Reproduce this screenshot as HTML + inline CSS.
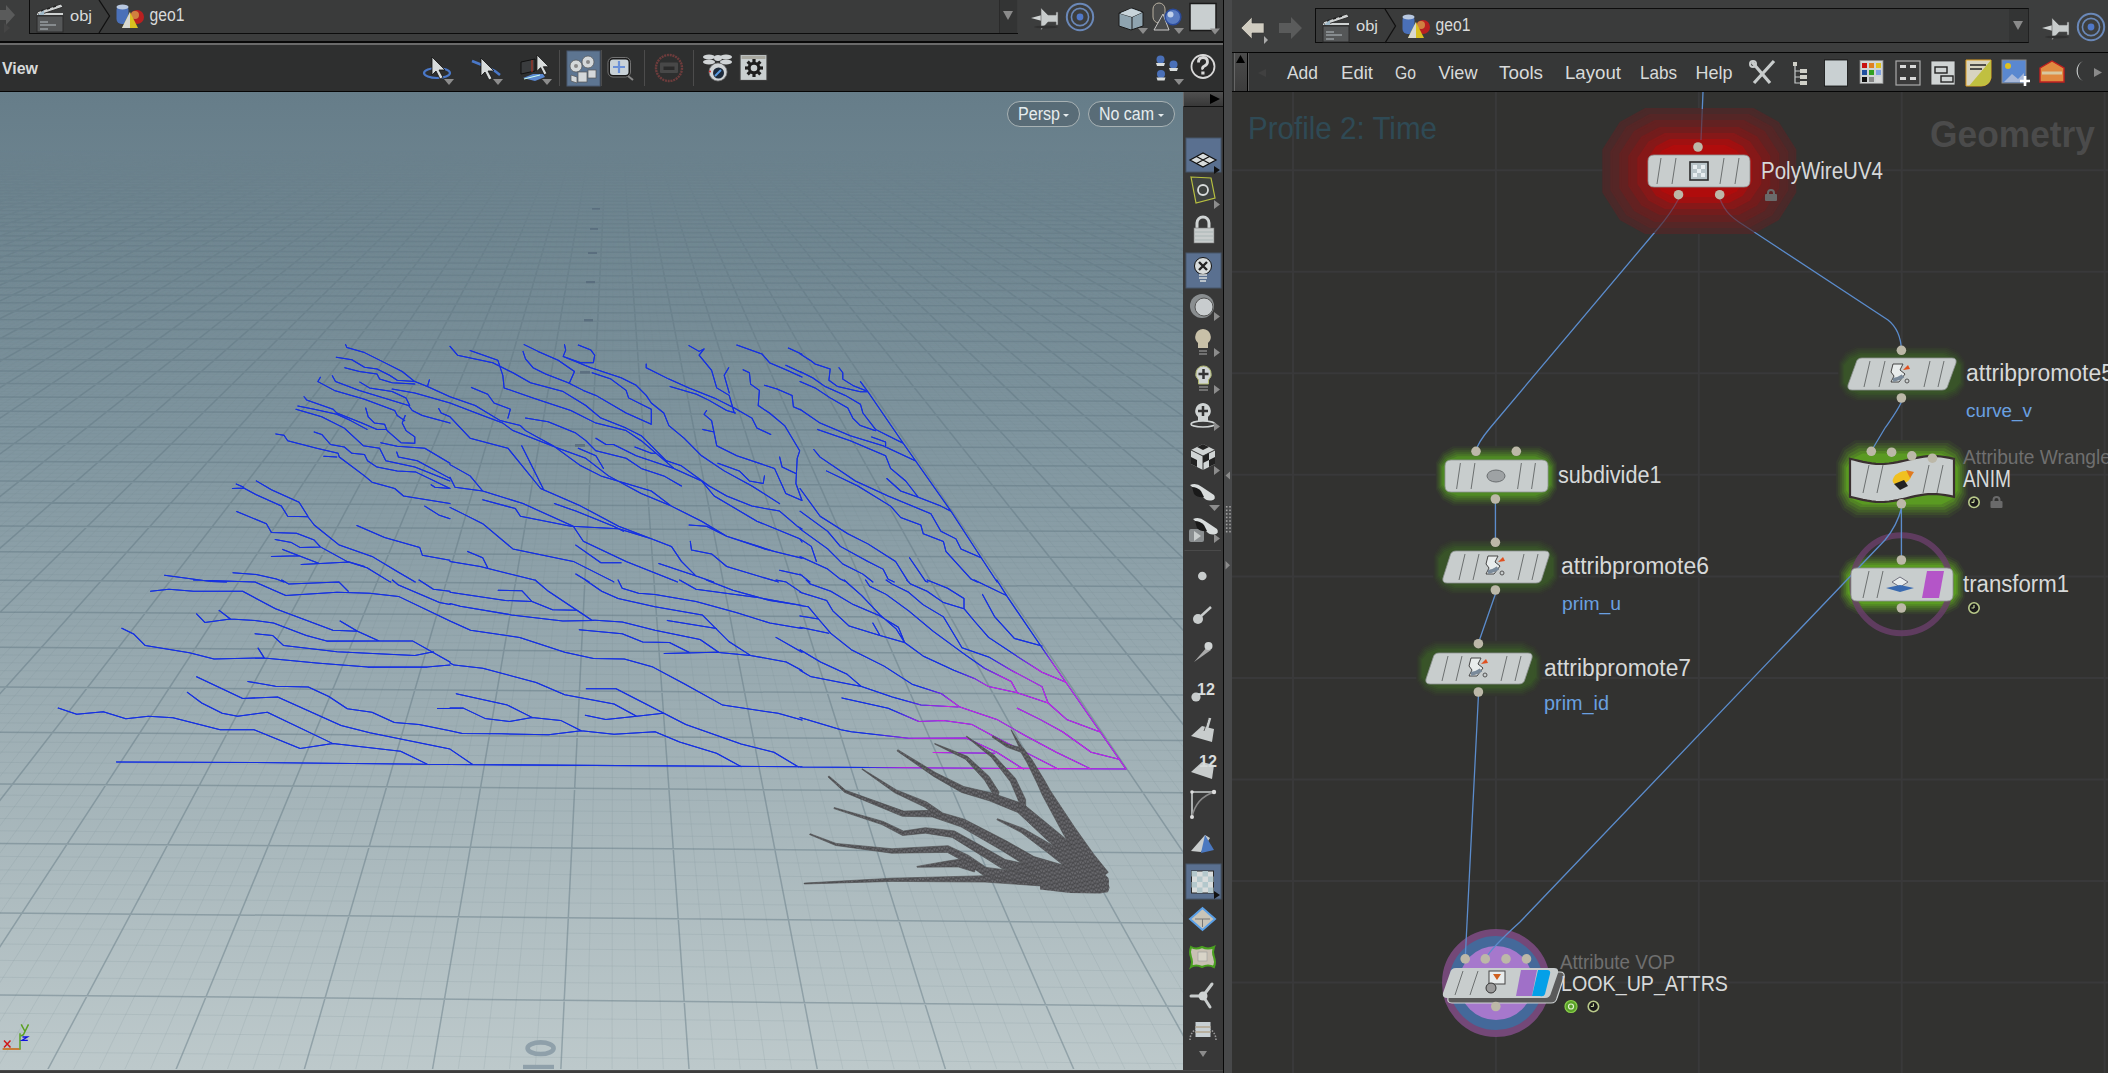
<!DOCTYPE html><html><head><meta charset="utf-8"><style>
*{margin:0;padding:0;box-sizing:border-box}
html,body{width:2108px;height:1073px;overflow:hidden;background:#2b2b2b;font-family:"Liberation Sans",sans-serif}
.a{position:absolute}
svg{position:absolute;left:0;top:0;overflow:hidden}
</style></head><body><svg width="1183" height="1073" viewBox="0 0 1183 1073" style="left:0;top:0"><defs><linearGradient id="vg" x1="0" y1="92" x2="0" y2="1070" gradientUnits="userSpaceOnUse"><stop offset="0" stop-color="#667d89"/><stop offset="0.35" stop-color="#7f959f"/><stop offset="0.7" stop-color="#a3b3b8"/><stop offset="1" stop-color="#bdc9cb"/></linearGradient><linearGradient id="gm" x1="0" y1="150" x2="0" y2="1070" gradientUnits="userSpaceOnUse"><stop offset="0" stop-color="#fff" stop-opacity="0"/><stop offset="0.038" stop-color="#fff" stop-opacity="0.45"/><stop offset="0.087" stop-color="#fff" stop-opacity="0.85"/><stop offset="0.17" stop-color="#fff" stop-opacity="1"/><stop offset="1" stop-color="#fff" stop-opacity="1"/></linearGradient><mask id="gmask" maskUnits="userSpaceOnUse" x="0" y="0" width="1183" height="1073"><rect x="0" y="92" width="1183" height="978" fill="url(#gm)"/></mask><clipPath id="vclip"><rect x="0" y="92" width="1183" height="977"/></clipPath></defs><rect x="0" y="92" width="1183" height="978" fill="url(#vg)"/><g clip-path="url(#vclip)"><g mask="url(#gmask)"><path d="M0.0 1072.2L1183.0 1084.4M0.0 1051.8L1183.0 1063.7M0.0 1032.1L1183.0 1043.8M0.0 1013.2L1183.0 1024.7M0.0 977.3L1183.0 988.5M0.0 960.4L1183.0 971.3M0.0 944.0L1183.0 954.7M0.0 928.2L1183.0 938.7M0.0 898.1L1183.0 908.3M0.0 883.7L1183.0 893.8M0.0 869.9L1183.0 879.7M0.0 856.4L1183.0 866.1M0.0 830.8L1183.0 840.2M0.0 818.5L1183.0 827.8M0.0 806.6L1183.0 815.8M0.0 795.1L1183.0 804.1M0.0 773.0L1183.0 781.7M0.0 762.4L1183.0 771.0M0.0 752.1L1183.0 760.6M0.0 742.0L1183.0 750.5M0.0 722.8L1183.0 731.0M0.0 713.5L1183.0 721.6M0.0 704.5L1183.0 712.5M0.0 695.7L1183.0 703.6M0.0 678.8L1183.0 686.5M0.0 670.6L1183.0 678.2M0.0 662.7L1183.0 670.2M0.0 654.9L1183.0 662.3M0.0 639.9L1183.0 647.1M0.0 632.7L1183.0 639.8M0.0 625.6L1183.0 632.7M0.0 618.7L1183.0 625.7M0.0 605.3L1183.0 612.1M0.0 598.8L1183.0 605.6M0.0 592.5L1183.0 599.2M0.0 586.3L1183.0 592.9M0.0 574.3L1183.0 580.8M0.0 568.5L1183.0 574.9M0.0 562.8L1183.0 569.1M0.0 557.2L1183.0 563.5M0.0 546.3L1183.0 552.5M0.0 541.1L1183.0 547.2M0.0 535.9L1183.0 542.0M0.0 530.9L1183.0 536.9M0.0 521.0L1183.0 526.9M0.0 516.3L1183.0 522.1M0.0 511.6L1183.0 517.3M0.0 507.0L1183.0 512.7M0.0 498.0L1183.0 503.6M0.0 493.7L1183.0 499.2M0.0 489.4L1183.0 494.9M0.0 485.2L1183.0 490.6M0.0 477.0L1183.0 482.4M0.0 473.0L1183.0 478.3M0.0 469.1L1183.0 474.4M0.0 465.2L1183.0 470.4M0.0 457.7L1183.0 462.8M0.0 454.0L1183.0 459.1M0.0 450.4L1183.0 455.5M0.0 446.9L1183.0 451.9M0.0 439.9L1183.0 444.9M0.0 436.5L1183.0 441.4M0.0 433.2L1183.0 438.1M0.0 429.9L1183.0 434.8M0.0 423.5L1183.0 428.3M0.0 420.4L1183.0 425.1M0.0 417.3L1183.0 422.0M0.0 414.3L1183.0 418.9M0.0 408.3L1183.0 412.9M0.0 405.4L1183.0 410.0M0.0 402.5L1183.0 407.1M0.0 399.7L1183.0 404.2M0.0 394.2L1183.0 398.6M0.0 391.5L1183.0 395.9M0.0 388.8L1183.0 393.2M0.0 386.2L1183.0 390.5M0.0 381.0L1183.0 385.3M0.0 378.5L1183.0 382.7M0.0 376.0L1183.0 380.2M0.0 373.6L1183.0 377.7M0.0 368.7L1183.0 372.9M0.0 366.4L1183.0 370.5M0.0 364.1L1183.0 368.1M0.0 361.8L1183.0 365.8M0.0 357.3L1183.0 361.2M0.0 355.0L1183.0 359.0M0.0 352.9L1183.0 356.8M0.0 350.7L1183.0 354.6M0.0 346.5L1183.0 350.3M0.0 344.4L1183.0 348.2M0.0 342.3L1183.0 346.2M0.0 340.3L1183.0 344.1M0.0 336.3L1183.0 340.1M0.0 334.4L1183.0 338.1M0.0 332.4L1183.0 336.2M0.0 330.5L1183.0 334.2M0.0 326.8L1183.0 330.4M0.0 324.9L1183.0 328.6M0.0 323.1L1183.0 326.7M0.0 321.3L1183.0 324.9M0.0 317.8L1183.0 321.3M0.0 316.1L1183.0 319.6M0.0 314.3L1183.0 317.8M0.0 312.6L1183.0 316.1M0.0 309.3L1183.0 312.7M0.0 307.6L1183.0 311.1M0.0 306.0L1183.0 309.4M0.0 304.4L1183.0 307.8M0.0 301.2L1183.0 304.6M0.0 299.7L1183.0 303.0M0.0 298.1L1183.0 301.5M0.0 296.6L1183.0 299.9M0.0 293.6L1183.0 296.9M0.0 292.1L1183.0 295.4M0.0 290.7L1183.0 293.9M0.0 289.2L1183.0 292.4M0.0 286.4L1183.0 289.6M0.0 285.0L1183.0 288.1M0.0 283.6L1183.0 286.7M0.0 282.2L1183.0 285.3M0.0 279.5L1183.0 282.6M0.0 278.2L1183.0 281.3M0.0 276.9L1183.0 279.9M0.0 275.5L1183.0 278.6M0.0 273.0L1183.0 276.0M0.0 271.7L1183.0 274.7M0.0 270.4L1183.0 273.4M0.0 269.2L1183.0 272.2M0.0 266.7L1183.0 269.7M0.0 265.5L1183.0 268.5M0.0 264.3L1183.0 267.2M0.0 263.1L1183.0 266.0M0.0 260.8L1183.0 263.7M0.0 259.6L1183.0 262.5M0.0 258.5L1183.0 261.3M0.0 257.4L1183.0 260.2M0.0 255.1L1183.0 257.9M0.0 254.0L1183.0 256.8M0.0 252.9L1183.0 255.7M0.0 251.8L1183.0 254.6M0.0 249.7L1183.0 252.4M0.0 248.6L1183.0 251.4M0.0 247.6L1183.0 250.3M0.0 246.6L1183.0 249.3M0.0 244.5L1183.0 247.2M0.0 243.5L1183.0 246.2M0.0 242.5L1183.0 245.2M0.0 241.5L1183.0 244.2M0.0 239.5L1183.0 242.2M0.0 238.6L1183.0 241.2M0.0 237.6L1183.0 240.2M0.0 236.7L1183.0 239.3M0.0 234.8L1183.0 237.4M0.0 233.8L1183.0 236.4M0.0 232.9L1183.0 235.5M0.0 232.0L1183.0 234.6M0.0 230.2L1183.0 232.7M0.0 229.3L1183.0 231.8M0.0 228.4L1183.0 230.9M0.0 227.6L1183.0 230.1M0.0 225.8L1183.0 228.3M0.0 225.0L1183.0 227.4M0.0 224.1L1183.0 226.6M0.0 223.3L1183.0 225.7M0.0 221.6L1183.0 224.0M0.0 220.8L1183.0 223.2M0.0 220.0L1183.0 222.4M0.0 219.2L1183.0 221.6M0.0 217.6L1183.0 219.9M0.0 216.8L1183.0 219.1M0.0 216.0L1183.0 218.3M0.0 215.2L1183.0 217.6M0.0 213.7L1183.0 216.0M0.0 212.9L1183.0 215.2M0.0 212.1L1183.0 214.5M0.0 211.4L1183.0 213.7M0.0 209.9L1183.0 212.2M0.0 209.2L1183.0 211.4M0.0 208.4L1183.0 210.7M0.0 207.7L1183.0 210.0M0.0 206.3L1183.0 208.5M0.0 205.6L1183.0 207.8M0.0 204.9L1183.0 207.1M0.0 204.2L1183.0 206.4M0.0 202.8L1183.0 205.0M0.0 202.1L1183.0 204.3M0.0 201.4L1183.0 203.6M0.0 200.7L1183.0 202.9M0.0 199.4L1183.0 201.6M0.0 198.7L1183.0 200.9M0.0 198.1L1183.0 200.3M0.0 197.4L1183.0 199.6M0.0 196.2L1183.0 198.3M0.0 195.5L1183.0 197.6M0.0 194.9L1183.0 197.0M0.0 194.3L1183.0 196.4M0.0 193.0L1183.0 195.1M0.0 192.4L1183.0 194.5M0.0 191.8L1183.0 193.9M0.0 191.2L1183.0 193.3M0.0 190.0L1183.0 192.0M0.0 189.4L1183.0 191.4M0.0 188.8L1183.0 190.8M0.0 188.2L1183.0 190.2M0.0 187.0L1183.0 189.1M0.0 186.5L1183.0 188.5M0.0 185.9L1183.0 187.9M0.0 185.3L1183.0 187.3M0.0 184.2L1183.0 186.2M0.0 183.6L1183.0 185.6M0.0 183.1L1183.0 185.1M0.0 182.5L1183.0 184.5M0.0 181.4L1183.0 183.4M0.0 180.9L1183.0 182.8M0.0 180.3L1183.0 182.3M0.0 179.8L1183.0 181.8M0.0 178.8L1183.0 180.7M0.0 178.2L1183.0 180.2M0.0 177.7L1183.0 179.6M0.0 177.2L1183.0 179.1M0.0 176.2L1183.0 178.1M0.0 175.7L1183.0 177.6M0.0 175.2L1183.0 177.1M0.0 174.7L1183.0 176.5M0.0 173.7L1183.0 175.5M0.0 173.2L1183.0 175.0M0.0 172.7L1183.0 174.5M0.0 172.2L1183.0 174.1M0.0 171.2L1183.0 173.1M0.0 170.7L1183.0 172.6M0.0 170.3L1183.0 172.1M0.0 169.8L1183.0 171.6M0.0 168.9L1183.0 170.7M0.0 168.4L1183.0 170.2M0.0 167.9L1183.0 169.7M0.0 167.5L1183.0 169.3M0.0 166.6L1183.0 168.4M0.0 166.1L1183.0 167.9M0.0 165.7L1183.0 167.5M0.0 165.2L1183.0 167.0M0.0 164.3L1183.0 166.1M0.0 163.9L1183.0 165.7M0.0 163.5L1183.0 165.2M0.0 163.0L1183.0 164.8M0.0 162.2L1183.0 163.9M0.0 161.7L1183.0 163.5M0.0 161.3L1183.0 163.1M0.0 160.9L1183.0 162.6M0.0 160.1L1183.0 161.8M0.0 159.6L1183.0 161.4M0.0 159.2L1183.0 160.9M0.0 158.8L1183.0 160.5M0.0 158.0L1183.0 159.7M0.0 157.6L1183.0 159.3M0.0 157.2L1183.0 158.9M0.0 156.8L1183.0 158.5M0.0 156.0L1183.0 157.7M0.0 155.6L1183.0 157.3M0.0 155.2L1183.0 156.9M0.0 154.8L1183.0 156.5M0.0 154.1L1183.0 155.7M0.0 153.7L1183.0 155.3M0.0 153.3L1183.0 155.0M0.0 152.9L1183.0 154.6M0.0 152.2L1183.0 153.8M0.0 151.8L1183.0 153.4M0.0 151.4L1183.0 153.1M0.0 151.1L1183.0 152.7M0.0 150.3L1183.0 152.0M-475.2 150.0L-7626.2 1070.0M-471.8 150.0L-7600.5 1070.0M-468.4 150.0L-7574.9 1070.0M-465.0 150.0L-7549.2 1070.0M-458.2 150.0L-7497.9 1070.0M-454.9 150.0L-7472.2 1070.0M-451.5 150.0L-7446.6 1070.0M-448.1 150.0L-7420.9 1070.0M-441.3 150.0L-7369.6 1070.0M-437.9 150.0L-7343.9 1070.0M-434.5 150.0L-7318.2 1070.0M-431.1 150.0L-7292.6 1070.0M-424.4 150.0L-7241.2 1070.0M-421.0 150.0L-7215.6 1070.0M-417.6 150.0L-7189.9 1070.0M-414.2 150.0L-7164.3 1070.0M-407.4 150.0L-7112.9 1070.0M-404.0 150.0L-7087.3 1070.0M-400.6 150.0L-7061.6 1070.0M-397.2 150.0L-7035.9 1070.0M-390.5 150.0L-6984.6 1070.0M-387.1 150.0L-6958.9 1070.0M-383.7 150.0L-6933.3 1070.0M-380.3 150.0L-6907.6 1070.0M-373.5 150.0L-6856.3 1070.0M-370.1 150.0L-6830.6 1070.0M-366.7 150.0L-6804.9 1070.0M-363.3 150.0L-6779.3 1070.0M-356.6 150.0L-6728.0 1070.0M-353.2 150.0L-6702.3 1070.0M-349.8 150.0L-6676.6 1070.0M-346.4 150.0L-6651.0 1070.0M-339.6 150.0L-6599.6 1070.0M-336.2 150.0L-6574.0 1070.0M-332.8 150.0L-6548.3 1070.0M-329.4 150.0L-6522.6 1070.0M-322.7 150.0L-6471.3 1070.0M-319.3 150.0L-6445.6 1070.0M-315.9 150.0L-6420.0 1070.0M-312.5 150.0L-6394.3 1070.0M-305.7 150.0L-6343.0 1070.0M-302.3 150.0L-6317.3 1070.0M-298.9 150.0L-6291.7 1070.0M-295.5 150.0L-6266.0 1070.0M-288.8 150.0L-6214.7 1070.0M-285.4 150.0L-6189.0 1070.0M-282.0 150.0L-6163.3 1070.0M-278.6 150.0L-6137.7 1070.0M-271.8 150.0L-6086.3 1070.0M-268.4 150.0L-6060.7 1070.0M-265.0 150.0L-6035.0 1070.0M-261.6 150.0L-6009.3 1070.0M-254.9 150.0L-5958.0 1070.0M-251.5 150.0L-5932.4 1070.0M-248.1 150.0L-5906.7 1070.0M-244.7 150.0L-5881.0 1070.0M-237.9 150.0L-5829.7 1070.0M-234.5 150.0L-5804.0 1070.0M-231.1 150.0L-5778.4 1070.0M-227.8 150.0L-5752.7 1070.0M-221.0 150.0L-5701.4 1070.0M-217.6 150.0L-5675.7 1070.0M-214.2 150.0L-5650.0 1070.0M-210.8 150.0L-5624.4 1070.0M-204.0 150.0L-5573.1 1070.0M-200.6 150.0L-5547.4 1070.0M-197.2 150.0L-5521.7 1070.0M-193.9 150.0L-5496.1 1070.0M-187.1 150.0L-5444.7 1070.0M-183.7 150.0L-5419.1 1070.0M-180.3 150.0L-5393.4 1070.0M-176.9 150.0L-5367.7 1070.0M-170.1 150.0L-5316.4 1070.0M-166.7 150.0L-5290.7 1070.0M-163.3 150.0L-5265.1 1070.0M-160.0 150.0L-5239.4 1070.0M-153.2 150.0L-5188.1 1070.0M-149.8 150.0L-5162.4 1070.0M-146.4 150.0L-5136.8 1070.0M-143.0 150.0L-5111.1 1070.0M-136.2 150.0L-5059.8 1070.0M-132.8 150.0L-5034.1 1070.0M-129.5 150.0L-5008.4 1070.0M-126.1 150.0L-4982.8 1070.0M-119.3 150.0L-4931.4 1070.0M-115.9 150.0L-4905.8 1070.0M-112.5 150.0L-4880.1 1070.0M-109.1 150.0L-4854.4 1070.0M-102.3 150.0L-4803.1 1070.0M-98.9 150.0L-4777.5 1070.0M-95.6 150.0L-4751.8 1070.0M-92.2 150.0L-4726.1 1070.0M-85.4 150.0L-4674.8 1070.0M-82.0 150.0L-4649.1 1070.0M-78.6 150.0L-4623.5 1070.0M-75.2 150.0L-4597.8 1070.0M-68.4 150.0L-4546.5 1070.0M-65.0 150.0L-4520.8 1070.0M-61.7 150.0L-4495.1 1070.0M-58.3 150.0L-4469.5 1070.0M-51.5 150.0L-4418.1 1070.0M-48.1 150.0L-4392.5 1070.0M-44.7 150.0L-4366.8 1070.0M-41.3 150.0L-4341.2 1070.0M-34.5 150.0L-4289.8 1070.0M-31.2 150.0L-4264.2 1070.0M-27.8 150.0L-4238.5 1070.0M-24.4 150.0L-4212.8 1070.0M-17.6 150.0L-4161.5 1070.0M-14.2 150.0L-4135.8 1070.0M-10.8 150.0L-4110.2 1070.0M-7.4 150.0L-4084.5 1070.0M-0.6 150.0L-4033.2 1070.0M2.7 150.0L-4007.5 1070.0M6.1 150.0L-3981.9 1070.0M9.5 150.0L-3956.2 1070.0M16.3 150.0L-3904.9 1070.0M19.7 150.0L-3879.2 1070.0M23.1 150.0L-3853.5 1070.0M26.5 150.0L-3827.9 1070.0M33.3 150.0L-3776.5 1070.0M36.6 150.0L-3750.9 1070.0M40.0 150.0L-3725.2 1070.0M43.4 150.0L-3699.5 1070.0M50.2 150.0L-3648.2 1070.0M53.6 150.0L-3622.5 1070.0M57.0 150.0L-3596.9 1070.0M60.4 150.0L-3571.2 1070.0M67.1 150.0L-3519.9 1070.0M70.5 150.0L-3494.2 1070.0M73.9 150.0L-3468.6 1070.0M77.3 150.0L-3442.9 1070.0M84.1 150.0L-3391.6 1070.0M87.5 150.0L-3365.9 1070.0M90.9 150.0L-3340.2 1070.0M94.3 150.0L-3314.6 1070.0M101.0 150.0L-3263.2 1070.0M104.4 150.0L-3237.6 1070.0M107.8 150.0L-3211.9 1070.0M111.2 150.0L-3186.3 1070.0M118.0 150.0L-3134.9 1070.0M121.4 150.0L-3109.3 1070.0M124.8 150.0L-3083.6 1070.0M128.2 150.0L-3057.9 1070.0M134.9 150.0L-3006.6 1070.0M138.3 150.0L-2980.9 1070.0M141.7 150.0L-2955.3 1070.0M145.1 150.0L-2929.6 1070.0M151.9 150.0L-2878.3 1070.0M155.3 150.0L-2852.6 1070.0M158.7 150.0L-2826.9 1070.0M162.1 150.0L-2801.3 1070.0M168.8 150.0L-2750.0 1070.0M172.2 150.0L-2724.3 1070.0M175.6 150.0L-2698.6 1070.0M179.0 150.0L-2673.0 1070.0M185.8 150.0L-2621.6 1070.0M189.2 150.0L-2596.0 1070.0M192.6 150.0L-2570.3 1070.0M196.0 150.0L-2544.6 1070.0M202.7 150.0L-2493.3 1070.0M206.1 150.0L-2467.6 1070.0M209.5 150.0L-2442.0 1070.0M212.9 150.0L-2416.3 1070.0M219.7 150.0L-2365.0 1070.0M223.1 150.0L-2339.3 1070.0M226.5 150.0L-2313.7 1070.0M229.9 150.0L-2288.0 1070.0M236.6 150.0L-2236.7 1070.0M240.0 150.0L-2211.0 1070.0M243.4 150.0L-2185.3 1070.0M246.8 150.0L-2159.7 1070.0M253.6 150.0L-2108.3 1070.0M257.0 150.0L-2082.7 1070.0M260.4 150.0L-2057.0 1070.0M263.7 150.0L-2031.3 1070.0M270.5 150.0L-1980.0 1070.0M273.9 150.0L-1954.4 1070.0M277.3 150.0L-1928.7 1070.0M280.7 150.0L-1903.0 1070.0M287.5 150.0L-1851.7 1070.0M290.9 150.0L-1826.0 1070.0M294.3 150.0L-1800.4 1070.0M297.6 150.0L-1774.7 1070.0M304.4 150.0L-1723.4 1070.0M307.8 150.0L-1697.7 1070.0M311.2 150.0L-1672.0 1070.0M314.6 150.0L-1646.4 1070.0M321.4 150.0L-1595.0 1070.0M324.8 150.0L-1569.4 1070.0M328.2 150.0L-1543.7 1070.0M331.5 150.0L-1518.1 1070.0M338.3 150.0L-1466.7 1070.0M341.7 150.0L-1441.1 1070.0M345.1 150.0L-1415.4 1070.0M348.5 150.0L-1389.7 1070.0M355.3 150.0L-1338.4 1070.0M358.7 150.0L-1312.7 1070.0M362.0 150.0L-1287.1 1070.0M365.4 150.0L-1261.4 1070.0M372.2 150.0L-1210.1 1070.0M375.6 150.0L-1184.4 1070.0M379.0 150.0L-1158.8 1070.0M382.4 150.0L-1133.1 1070.0M389.2 150.0L-1081.8 1070.0M392.6 150.0L-1056.1 1070.0M395.9 150.0L-1030.4 1070.0M399.3 150.0L-1004.8 1070.0M406.1 150.0L-953.4 1070.0M409.5 150.0L-927.8 1070.0M412.9 150.0L-902.1 1070.0M416.3 150.0L-876.4 1070.0M423.1 150.0L-825.1 1070.0M426.5 150.0L-799.4 1070.0M429.8 150.0L-773.8 1070.0M433.2 150.0L-748.1 1070.0M440.0 150.0L-696.8 1070.0M443.4 150.0L-671.1 1070.0M446.8 150.0L-645.5 1070.0M450.2 150.0L-619.8 1070.0M457.0 150.0L-568.5 1070.0M460.3 150.0L-542.8 1070.0M463.7 150.0L-517.1 1070.0M467.1 150.0L-491.5 1070.0M473.9 150.0L-440.1 1070.0M477.3 150.0L-414.5 1070.0M480.7 150.0L-388.8 1070.0M484.1 150.0L-363.2 1070.0M490.9 150.0L-311.8 1070.0M494.2 150.0L-286.2 1070.0M497.6 150.0L-260.5 1070.0M501.0 150.0L-234.8 1070.0M507.8 150.0L-183.5 1070.0M511.2 150.0L-157.8 1070.0M514.6 150.0L-132.2 1070.0M518.0 150.0L-106.5 1070.0M524.8 150.0L-55.2 1070.0M528.1 150.0L-29.5 1070.0M531.5 150.0L-3.8 1070.0M534.9 150.0L21.8 1070.0M541.7 150.0L73.1 1070.0M545.1 150.0L98.8 1070.0M548.5 150.0L124.5 1070.0M551.9 150.0L150.1 1070.0M558.6 150.0L201.5 1070.0M562.0 150.0L227.1 1070.0M565.4 150.0L252.8 1070.0M568.8 150.0L278.5 1070.0M575.6 150.0L329.8 1070.0M579.0 150.0L355.5 1070.0M582.4 150.0L381.1 1070.0M585.8 150.0L406.8 1070.0M592.5 150.0L458.1 1070.0M595.9 150.0L483.8 1070.0M599.3 150.0L509.4 1070.0M602.7 150.0L535.1 1070.0M609.5 150.0L586.4 1070.0M612.9 150.0L612.1 1070.0M616.3 150.0L637.8 1070.0M619.7 150.0L663.4 1070.0M626.4 150.0L714.8 1070.0M629.8 150.0L740.4 1070.0M633.2 150.0L766.1 1070.0M636.6 150.0L791.8 1070.0M643.4 150.0L843.1 1070.0M646.8 150.0L868.7 1070.0M650.2 150.0L894.4 1070.0M653.6 150.0L920.1 1070.0M660.3 150.0L971.4 1070.0M663.7 150.0L997.1 1070.0M667.1 150.0L1022.7 1070.0M670.5 150.0L1048.4 1070.0M677.3 150.0L1099.7 1070.0M680.7 150.0L1125.4 1070.0M684.1 150.0L1151.1 1070.0M687.5 150.0L1176.7 1070.0M694.2 150.0L1228.0 1070.0M697.6 150.0L1253.7 1070.0M701.0 150.0L1279.4 1070.0M704.4 150.0L1305.0 1070.0M711.2 150.0L1356.4 1070.0M714.6 150.0L1382.0 1070.0M718.0 150.0L1407.7 1070.0M721.4 150.0L1433.4 1070.0M728.1 150.0L1484.7 1070.0M731.5 150.0L1510.4 1070.0M734.9 150.0L1536.0 1070.0M738.3 150.0L1561.7 1070.0M745.1 150.0L1613.0 1070.0M748.5 150.0L1638.7 1070.0M751.9 150.0L1664.3 1070.0M755.2 150.0L1690.0 1070.0M762.0 150.0L1741.3 1070.0M765.4 150.0L1767.0 1070.0M768.8 150.0L1792.7 1070.0M772.2 150.0L1818.3 1070.0M779.0 150.0L1869.7 1070.0M782.4 150.0L1895.3 1070.0M785.8 150.0L1921.0 1070.0M789.1 150.0L1946.7 1070.0M795.9 150.0L1998.0 1070.0M799.3 150.0L2023.6 1070.0M802.7 150.0L2049.3 1070.0M806.1 150.0L2075.0 1070.0M812.9 150.0L2126.3 1070.0M816.3 150.0L2152.0 1070.0M819.6 150.0L2177.6 1070.0M823.0 150.0L2203.3 1070.0M829.8 150.0L2254.6 1070.0M833.2 150.0L2280.3 1070.0M836.6 150.0L2306.0 1070.0M840.0 150.0L2331.6 1070.0M846.8 150.0L2383.0 1070.0M850.2 150.0L2408.6 1070.0M853.5 150.0L2434.3 1070.0M856.9 150.0L2459.9 1070.0M863.7 150.0L2511.3 1070.0M867.1 150.0L2536.9 1070.0M870.5 150.0L2562.6 1070.0M873.9 150.0L2588.3 1070.0M880.7 150.0L2639.6 1070.0M884.1 150.0L2665.3 1070.0M887.4 150.0L2690.9 1070.0M890.8 150.0L2716.6 1070.0M897.6 150.0L2767.9 1070.0M901.0 150.0L2793.6 1070.0M904.4 150.0L2819.2 1070.0M907.8 150.0L2844.9 1070.0M914.6 150.0L2896.2 1070.0M917.9 150.0L2921.9 1070.0M921.3 150.0L2947.6 1070.0M924.7 150.0L2973.2 1070.0M931.5 150.0L3024.6 1070.0M934.9 150.0L3050.2 1070.0M938.3 150.0L3075.9 1070.0M941.7 150.0L3101.6 1070.0M948.5 150.0L3152.9 1070.0M951.8 150.0L3178.6 1070.0M955.2 150.0L3204.2 1070.0M958.6 150.0L3229.9 1070.0M965.4 150.0L3281.2 1070.0M968.8 150.0L3306.9 1070.0M972.2 150.0L3332.5 1070.0M975.6 150.0L3358.2 1070.0M982.4 150.0L3409.5 1070.0M985.7 150.0L3435.2 1070.0M989.1 150.0L3460.9 1070.0M992.5 150.0L3486.5 1070.0M999.3 150.0L3537.9 1070.0M1002.7 150.0L3563.5 1070.0M1006.1 150.0L3589.2 1070.0M1009.5 150.0L3614.8 1070.0M1016.2 150.0L3666.2 1070.0M1019.6 150.0L3691.8 1070.0M1023.0 150.0L3717.5 1070.0M1026.4 150.0L3743.2 1070.0M1033.2 150.0L3794.5 1070.0M1036.6 150.0L3820.2 1070.0M1040.0 150.0L3845.8 1070.0M1043.4 150.0L3871.5 1070.0M1050.1 150.0L3922.8 1070.0M1053.5 150.0L3948.5 1070.0M1056.9 150.0L3974.2 1070.0M1060.3 150.0L3999.8 1070.0M1067.1 150.0L4051.1 1070.0M1070.5 150.0L4076.8 1070.0M1073.9 150.0L4102.5 1070.0M1077.3 150.0L4128.1 1070.0M1084.0 150.0L4179.5 1070.0M1087.4 150.0L4205.1 1070.0M1090.8 150.0L4230.8 1070.0M1094.2 150.0L4256.5 1070.0M1101.0 150.0L4307.8 1070.0M1104.4 150.0L4333.5 1070.0M1107.8 150.0L4359.1 1070.0M1111.2 150.0L4384.8 1070.0M1117.9 150.0L4436.1 1070.0M1121.3 150.0L4461.8 1070.0M1124.7 150.0L4487.4 1070.0M1128.1 150.0L4513.1 1070.0M1134.9 150.0L4564.4 1070.0M1138.3 150.0L4590.1 1070.0M1141.7 150.0L4615.8 1070.0M1145.1 150.0L4641.4 1070.0M1151.8 150.0L4692.8 1070.0M1155.2 150.0L4718.4 1070.0M1158.6 150.0L4744.1 1070.0M1162.0 150.0L4769.8 1070.0M1168.8 150.0L4821.1 1070.0M1172.2 150.0L4846.7 1070.0M1175.6 150.0L4872.4 1070.0M1179.0 150.0L4898.1 1070.0M1185.7 150.0L4949.4 1070.0M1189.1 150.0L4975.1 1070.0M1192.5 150.0L5000.7 1070.0M1195.9 150.0L5026.4 1070.0M1202.7 150.0L5077.7 1070.0M1206.1 150.0L5103.4 1070.0M1209.5 150.0L5129.1 1070.0M1212.8 150.0L5154.7 1070.0M1219.6 150.0L5206.0 1070.0M1223.0 150.0L5231.7 1070.0M1226.4 150.0L5257.4 1070.0M1229.8 150.0L5283.0 1070.0M1236.6 150.0L5334.4 1070.0M1240.0 150.0L5360.0 1070.0M1243.4 150.0L5385.7 1070.0M1246.7 150.0L5411.4 1070.0M1253.5 150.0L5462.7 1070.0M1256.9 150.0L5488.4 1070.0M1260.3 150.0L5514.0 1070.0M1263.7 150.0L5539.7 1070.0M1270.5 150.0L5591.0 1070.0M1273.9 150.0L5616.7 1070.0M1277.3 150.0L5642.3 1070.0M1280.6 150.0L5668.0 1070.0M1287.4 150.0L5719.3 1070.0M1290.8 150.0L5745.0 1070.0M1294.2 150.0L5770.7 1070.0M1297.6 150.0L5796.3 1070.0M1304.4 150.0L5847.7 1070.0M1307.8 150.0L5873.3 1070.0M1311.1 150.0L5899.0 1070.0M1314.5 150.0L5924.7 1070.0M1321.3 150.0L5976.0 1070.0M1324.7 150.0L6001.7 1070.0M1328.1 150.0L6027.3 1070.0M1331.5 150.0L6053.0 1070.0M1338.3 150.0L6104.3 1070.0M1341.7 150.0L6130.0 1070.0M1345.0 150.0L6155.6 1070.0M1348.4 150.0L6181.3 1070.0M1355.2 150.0L6232.6 1070.0M1358.6 150.0L6258.3 1070.0M1362.0 150.0L6284.0 1070.0M1365.4 150.0L6309.6 1070.0M1372.2 150.0L6361.0 1070.0M1375.6 150.0L6386.6 1070.0M1378.9 150.0L6412.3 1070.0M1382.3 150.0L6437.9 1070.0M1389.1 150.0L6489.3 1070.0M1392.5 150.0L6514.9 1070.0M1395.9 150.0L6540.6 1070.0M1399.3 150.0L6566.3 1070.0M1406.1 150.0L6617.6 1070.0M1409.4 150.0L6643.3 1070.0M1412.8 150.0L6668.9 1070.0M1416.2 150.0L6694.6 1070.0M1423.0 150.0L6745.9 1070.0M1426.4 150.0L6771.6 1070.0M1429.8 150.0L6797.3 1070.0M1433.2 150.0L6822.9 1070.0M1440.0 150.0L6874.2 1070.0M1443.3 150.0L6899.9 1070.0M1446.7 150.0L6925.6 1070.0M1450.1 150.0L6951.2 1070.0M1456.9 150.0L7002.6 1070.0M1460.3 150.0L7028.2 1070.0M1463.7 150.0L7053.9 1070.0M1467.1 150.0L7079.6 1070.0M1473.9 150.0L7130.9 1070.0M1477.2 150.0L7156.6 1070.0M1480.6 150.0L7182.2 1070.0M1484.0 150.0L7207.9 1070.0M1490.8 150.0L7259.2 1070.0M1494.2 150.0L7284.9 1070.0M1497.6 150.0L7310.5 1070.0M1501.0 150.0L7336.2 1070.0M1507.7 150.0L7387.5 1070.0M1511.1 150.0L7413.2 1070.0M1514.5 150.0L7438.9 1070.0M1517.9 150.0L7464.5 1070.0M1524.7 150.0L7515.9 1070.0M1528.1 150.0L7541.5 1070.0M1531.5 150.0L7567.2 1070.0M1534.9 150.0L7592.9 1070.0M1541.6 150.0L7644.2 1070.0M1545.0 150.0L7669.8 1070.0M1548.4 150.0L7695.5 1070.0M1551.8 150.0L7721.2 1070.0" stroke="#6f8590" stroke-opacity="0.14" stroke-width="1" fill="none"/><path d="M0.0 994.9L1183.0 1006.2M0.0 912.9L1183.0 923.2M0.0 843.4L1183.0 853.0M0.0 783.9L1183.0 792.8M0.0 732.3L1183.0 740.6M0.0 687.1L1183.0 694.9M0.0 647.3L1183.0 654.6M0.0 611.9L1183.0 618.8M0.0 580.2L1183.0 586.8M0.0 551.7L1183.0 557.9M0.0 525.9L1183.0 531.8M0.0 502.5L1183.0 508.1M0.0 481.1L1183.0 486.5M0.0 461.4L1183.0 466.6M0.0 443.4L1183.0 448.3M0.0 426.7L1183.0 431.5M0.0 411.3L1183.0 415.9M0.0 396.9L1183.0 401.4M0.0 383.6L1183.0 387.9M0.0 371.1L1183.0 375.3M0.0 359.5L1183.0 363.5M0.0 348.6L1183.0 352.5M0.0 338.3L1183.0 342.1M0.0 328.7L1183.0 332.3M0.0 319.5L1183.0 323.1M0.0 311.0L1183.0 314.4M0.0 302.8L1183.0 306.2M0.0 295.1L1183.0 298.4M0.0 287.8L1183.0 291.0M0.0 280.9L1183.0 284.0M0.0 274.2L1183.0 277.3M0.0 268.0L1183.0 270.9M0.0 262.0L1183.0 264.9M0.0 256.2L1183.0 259.1M0.0 250.8L1183.0 253.5M0.0 245.5L1183.0 248.2M0.0 240.5L1183.0 243.2M0.0 235.7L1183.0 238.3M0.0 231.1L1183.0 233.6M0.0 226.7L1183.0 229.2M0.0 222.4L1183.0 224.9M0.0 218.4L1183.0 220.7M0.0 214.4L1183.0 216.8M0.0 210.6L1183.0 212.9M0.0 207.0L1183.0 209.2M0.0 203.5L1183.0 205.7M0.0 200.1L1183.0 202.3M0.0 196.8L1183.0 198.9M0.0 193.6L1183.0 195.7M0.0 190.6L1183.0 192.6M0.0 187.6L1183.0 189.7M0.0 184.7L1183.0 186.8M0.0 182.0L1183.0 183.9M0.0 179.3L1183.0 181.2M0.0 176.7L1183.0 178.6M0.0 174.2L1183.0 176.0M0.0 171.7L1183.0 173.6M0.0 169.3L1183.0 171.2M0.0 167.0L1183.0 168.8M0.0 164.8L1183.0 166.6M0.0 162.6L1183.0 164.3M0.0 160.5L1183.0 162.2M0.0 158.4L1183.0 160.1M0.0 156.4L1183.0 158.1M0.0 154.5L1183.0 156.1M0.0 152.6L1183.0 154.2M0.0 150.7L1183.0 152.3M-478.6 150.0L-7651.9 1070.0M-461.6 150.0L-7523.6 1070.0M-444.7 150.0L-7395.2 1070.0M-427.7 150.0L-7266.9 1070.0M-410.8 150.0L-7138.6 1070.0M-393.8 150.0L-7010.3 1070.0M-376.9 150.0L-6881.9 1070.0M-359.9 150.0L-6753.6 1070.0M-343.0 150.0L-6625.3 1070.0M-326.1 150.0L-6497.0 1070.0M-309.1 150.0L-6368.7 1070.0M-292.2 150.0L-6240.3 1070.0M-275.2 150.0L-6112.0 1070.0M-258.3 150.0L-5983.7 1070.0M-241.3 150.0L-5855.4 1070.0M-224.4 150.0L-5727.0 1070.0M-207.4 150.0L-5598.7 1070.0M-190.5 150.0L-5470.4 1070.0M-173.5 150.0L-5342.1 1070.0M-156.6 150.0L-5213.7 1070.0M-139.6 150.0L-5085.4 1070.0M-122.7 150.0L-4957.1 1070.0M-105.7 150.0L-4828.8 1070.0M-88.8 150.0L-4700.5 1070.0M-71.8 150.0L-4572.1 1070.0M-54.9 150.0L-4443.8 1070.0M-37.9 150.0L-4315.5 1070.0M-21.0 150.0L-4187.2 1070.0M-4.0 150.0L-4058.8 1070.0M12.9 150.0L-3930.5 1070.0M29.9 150.0L-3802.2 1070.0M46.8 150.0L-3673.9 1070.0M63.8 150.0L-3545.6 1070.0M80.7 150.0L-3417.2 1070.0M97.7 150.0L-3288.9 1070.0M114.6 150.0L-3160.6 1070.0M131.6 150.0L-3032.3 1070.0M148.5 150.0L-2903.9 1070.0M165.4 150.0L-2775.6 1070.0M182.4 150.0L-2647.3 1070.0M199.3 150.0L-2519.0 1070.0M216.3 150.0L-2390.7 1070.0M233.2 150.0L-2262.3 1070.0M250.2 150.0L-2134.0 1070.0M267.1 150.0L-2005.7 1070.0M284.1 150.0L-1877.4 1070.0M301.0 150.0L-1749.0 1070.0M318.0 150.0L-1620.7 1070.0M334.9 150.0L-1492.4 1070.0M351.9 150.0L-1364.1 1070.0M368.8 150.0L-1235.7 1070.0M385.8 150.0L-1107.4 1070.0M402.7 150.0L-979.1 1070.0M419.7 150.0L-850.8 1070.0M436.6 150.0L-722.5 1070.0M453.6 150.0L-594.1 1070.0M470.5 150.0L-465.8 1070.0M487.5 150.0L-337.5 1070.0M504.4 150.0L-209.2 1070.0M521.4 150.0L-80.8 1070.0M538.3 150.0L47.5 1070.0M555.3 150.0L175.8 1070.0M572.2 150.0L304.1 1070.0M589.2 150.0L432.4 1070.0M606.1 150.0L560.8 1070.0M623.1 150.0L689.1 1070.0M640.0 150.0L817.4 1070.0M656.9 150.0L945.7 1070.0M673.9 150.0L1074.1 1070.0M690.8 150.0L1202.4 1070.0M707.8 150.0L1330.7 1070.0M724.7 150.0L1459.0 1070.0M741.7 150.0L1587.4 1070.0M758.6 150.0L1715.7 1070.0M775.6 150.0L1844.0 1070.0M792.5 150.0L1972.3 1070.0M809.5 150.0L2100.6 1070.0M826.4 150.0L2229.0 1070.0M843.4 150.0L2357.3 1070.0M860.3 150.0L2485.6 1070.0M877.3 150.0L2613.9 1070.0M894.2 150.0L2742.3 1070.0M911.2 150.0L2870.6 1070.0M928.1 150.0L2998.9 1070.0M945.1 150.0L3127.2 1070.0M962.0 150.0L3255.5 1070.0M979.0 150.0L3383.9 1070.0M995.9 150.0L3512.2 1070.0M1012.9 150.0L3640.5 1070.0M1029.8 150.0L3768.8 1070.0M1046.8 150.0L3897.2 1070.0M1063.7 150.0L4025.5 1070.0M1080.7 150.0L4153.8 1070.0M1097.6 150.0L4282.1 1070.0M1114.5 150.0L4410.4 1070.0M1131.5 150.0L4538.8 1070.0M1148.4 150.0L4667.1 1070.0M1165.4 150.0L4795.4 1070.0M1182.3 150.0L4923.7 1070.0M1199.3 150.0L5052.1 1070.0M1216.2 150.0L5180.4 1070.0M1233.2 150.0L5308.7 1070.0M1250.1 150.0L5437.0 1070.0M1267.1 150.0L5565.4 1070.0M1284.0 150.0L5693.7 1070.0M1301.0 150.0L5822.0 1070.0M1317.9 150.0L5950.3 1070.0M1334.9 150.0L6078.6 1070.0M1351.8 150.0L6207.0 1070.0M1368.8 150.0L6335.3 1070.0M1385.7 150.0L6463.6 1070.0M1402.7 150.0L6591.9 1070.0M1419.6 150.0L6720.3 1070.0M1436.6 150.0L6848.6 1070.0M1453.5 150.0L6976.9 1070.0M1470.5 150.0L7105.2 1070.0M1487.4 150.0L7233.5 1070.0M1504.4 150.0L7361.9 1070.0M1521.3 150.0L7490.2 1070.0M1538.3 150.0L7618.5 1070.0M1555.2 150.0L7746.8 1070.0" stroke="#5f7581" stroke-opacity="0.45" stroke-width="1.5" fill="none"/></g><ellipse cx="540.6" cy="1048.2" rx="13" ry="5.8" fill="none" stroke="#8fa0aa" stroke-width="4.6"/><rect x="523" y="1064.8" width="31" height="5" fill="#8fa0aa"/><path d="M2.6 1049H20.5" stroke="#c87830" stroke-width="1.9"/><path d="M20 1049.5V1033.3" stroke="#6aa840" stroke-width="1.8"/><path d="M4 1040.5L10.5 1047.5M10.5 1040.5L4 1047.5" stroke="#d01818" stroke-width="1.5"/><path d="M21.2 1024.3L24.8 1031M28.5 1024.3L23.5 1034.5Q22.5 1036 20.5 1035.5" stroke="#5aa020" stroke-width="1.5" fill="none"/><path d="M22.5 1037H27.5L22 1040.3H27.8" stroke="#1010e0" stroke-width="1.3" fill="none"/><rect x="592.0" y="208.0" width="8.0" height="1.6" fill="#56697a" opacity="0.8"/><rect x="590.0" y="228.0" width="8.0" height="1.8" fill="#56697a" opacity="0.8"/><rect x="588.0" y="252.0" width="9.0" height="2.0" fill="#56697a" opacity="0.8"/><rect x="586.0" y="281.0" width="9.0" height="2.2" fill="#56697a" opacity="0.8"/><rect x="584.0" y="319.0" width="9.0" height="2.4" fill="#56697a" opacity="0.8"/><rect x="580.0" y="371.0" width="10.0" height="2.6" fill="#56697a" opacity="0.8"/><rect x="575.0" y="444.0" width="10.0" height="2.8" fill="#56697a" opacity="0.8"/><defs><radialGradient id="tg" gradientUnits="userSpaceOnUse" cx="1126" cy="769" r="262" gradientTransform="translate(1126 769) scale(1 0.5) translate(-1126 -769)"><stop offset="0" stop-color="#d020e0"/><stop offset="0.84" stop-color="#d020e0"/><stop offset="1" stop-color="#1530e0"/></radialGradient></defs><path d="M345.6 344.6L346.9 347.6L364.5 352.6L382.1 361.4L402.2 371.5L414.8 381.6L427.4 386.6L450.0 396.7M336.3 357.2L351.9 359.7L364.5 367.2L377.0 369.0L389.6 375.3L397.2 380.3L414.8 381.6M344.8 367.7L359.4 371.5L377.0 374.0L379.6 379.1L392.1 382.8L414.8 384.1M429.4 379.8L427.4 386.6M320.4 377.3L317.9 381.6L334.3 390.4L364.5 399.2L394.7 410.5L397.2 415.5L404.7 420.6M332.3 375.8L335.5 381.6L359.4 390.4L392.1 400.4L408.5 405.5L412.3 410.5L422.3 415.5L450.0 423.1M359.9 382.1L369.5 387.9L392.1 391.6L406.0 397.9L409.7 405.5M392.1 389.1L414.8 392.9L450.0 403.0M304.1 396.7L306.6 399.9L333.0 409.2L336.8 413.0L361.9 423.1L377.0 429.4L385.8 429.4M297.8 406.0L314.2 409.2L336.8 414.3L350.6 420.6L367.0 429.4M296.0 409.2L321.7 416.8L344.3 428.1L363.2 445.7L379.6 448.2L385.8 460.8L414.8 467.1L450.0 480.9M365.7 408.0L368.2 416.8L374.5 423.1L384.6 424.3L387.1 430.6L400.9 442.7L414.8 443.2M405.2 415.5L402.2 423.1L406.0 430.6L414.8 436.9L414.8 443.2M380.8 442.7L397.2 446.2L424.8 448.2L450.0 463.3M396.7 452.0L398.4 457.0L417.3 460.8L450.0 478.4M438.7 408.5L441.2 413.0L450.0 416.8M275.9 433.9L284.0 435.2L287.7 440.7L316.7 448.2L338.1 453.3L339.3 457.0L364.5 475.9L372.0 482.2L394.7 488.5L403.5 496.0L450.0 503.6M314.2 431.9L321.7 434.4L330.5 444.5L344.3 447.0L351.9 453.3L364.5 454.5L367.5 460.8L377.0 467.1L397.2 470.9L416.0 472.1L450.0 488.5M323.7 456.3L336.8 457.0M431.1 484.7L434.9 487.2L450.0 488.5M424.8 506.1L438.7 514.9L450.0 518.7M232.4 488.5L243.7 488.0L256.3 494.8L281.4 506.1L287.7 516.2L307.9 516.7L314.2 525.0L339.3 545.1L372.0 556.4L397.2 571.5L415.2 582.0M236.2 484.0L243.7 487.2M256.3 480.9L271.4 489.7L299.1 502.3L307.9 516.2M236.7 511.6L266.4 523.7L271.4 532.5L296.5 533.3L314.2 540.1L320.4 546.9L346.9 561.4L367.0 567.7L389.6 581.6L390.7 582.0M275.2 539.6L291.5 542.6L300.3 547.6L320.4 546.9M282.7 549.4L319.2 563.5M271.4 556.4L299.1 555.7M301.1 564.5L349.4 561.9L364.5 566.5M356.9 525.5L384.6 537.5L419.8 547.6L422.3 555.2L450.0 560.2M164.5 575.3L211.0 581.6L226.4 582.0M232.9 572.8L256.3 574.5L276.4 579.1L283.8 582.0M450.0 346.4L457.5 355.2L492.8 362.7L512.9 372.8L530.5 382.8L563.2 391.6L585.8 405.5L600.9 418.1L626.1 428.1L641.2 435.7L666.4 460.8L681.4 465.8L709.1 486.0L726.7 496.0L751.9 506.1L779.6 511.1L797.2 526.2L802.0 529.0M470.1 350.6L497.8 360.2L502.8 375.3L504.1 387.9L533.0 397.9L570.8 410.5L595.9 423.1L626.1 430.6L641.2 440.7L673.9 468.4L701.6 480.9L714.2 496.0L756.9 521.2L799.7 538.8L802.0 542.0M524.2 344.6L538.1 351.4L558.2 360.2L574.5 371.5L569.5 382.8M523.0 351.4L525.5 358.9L533.0 367.7L545.6 374.0L568.2 382.8L583.3 390.4L595.9 395.4L626.1 413.0L651.3 424.3M564.5 344.6L565.7 350.1L563.2 356.4L580.8 362.7L593.4 362.7L594.7 355.2L590.9 350.1L578.3 345.1M563.2 356.4L590.9 367.7L621.1 377.8L636.2 385.3L646.2 395.4L651.3 403.0L663.8 413.0L668.9 425.6L684.0 438.2L701.6 455.8L724.2 470.9L751.9 486.0L779.6 503.6M592.1 372.8L611.0 379.1L626.1 390.4L628.6 397.9L651.3 409.2L651.3 423.1M646.2 364.0L646.2 367.7L668.9 379.1L689.0 387.9L714.2 397.9L734.3 408.0L751.9 418.1L756.9 428.1L770.8 434.4M670.1 386.6L696.5 394.2L709.1 400.4L726.7 410.5L735.5 413.0M689.0 345.6L699.1 351.4L704.1 348.9L699.1 355.2L711.6 370.3L716.7 387.9L729.2 395.4L734.3 413.0M728.7 367.7L724.2 375.3L729.2 392.9M736.8 345.1L761.9 353.9L769.5 362.7L787.1 370.3L802.0 377.0M743.1 369.7L749.4 372.8L750.6 384.1L759.4 390.4L758.2 405.5L769.5 413.0L784.6 425.6L799.7 450.8L797.2 458.3L795.9 483.5L802.0 500.5M764.5 385.3L777.0 389.1L792.1 395.4L793.4 406.7L802.0 410.4M788.4 348.1L802.0 354.2M785.8 365.2L802.0 372.8M706.6 410.5L704.1 414.3L711.6 420.6L716.7 445.7L736.8 455.8L774.5 468.4L785.8 493.5L802.0 500.5M702.8 429.4L714.2 431.9M779.6 457.0L782.1 467.1L795.9 473.4M717.9 463.3L739.3 470.9L749.4 480.9L763.2 483.5L764.5 475.9M471.4 387.4L487.7 394.2L494.0 403.0L510.4 409.2L507.9 418.1M450.0 396.7L475.2 405.5L500.3 420.6L520.4 425.6L525.5 430.6L553.1 445.7L580.8 465.8L600.9 475.9L651.3 491.0L671.4 506.1L701.6 521.2L726.7 536.3L764.5 548.9L802.0 558.3M450.0 403.0L482.7 415.5L502.8 423.1L512.9 430.6L558.2 448.2L585.8 458.3L608.5 475.9L641.2 493.5L671.4 506.1M525.5 418.1L548.1 421.8L575.8 433.1L585.8 440.7L595.9 450.8L626.1 458.3L641.2 468.4L663.8 475.9L681.4 486.0M595.9 438.2L606.0 444.5L613.5 444.5L636.2 455.8L673.9 468.4M634.9 447.0L651.3 453.3L656.3 453.3M578.3 448.2L595.9 455.8L603.5 468.4M450.0 416.8L470.1 438.2L507.9 448.2L540.6 488.5L580.8 506.1L618.6 526.2L651.3 538.8L671.4 546.4L681.4 561.4L696.5 576.5M521.7 445.7L543.1 488.5M450.0 464.6L470.1 475.9L482.7 491.0L523.0 503.6L573.3 526.2L583.3 541.3L626.1 561.4L676.4 581.6L677.4 582.0M450.0 507.4L462.6 513.6L482.7 523.7L512.9 548.9L573.3 561.4L613.5 581.6L613.8 582.0M482.7 499.8L515.4 508.6L520.4 516.2L570.8 526.2L618.6 528.7L651.3 538.8M554.4 503.6L575.8 511.1L613.5 526.2L623.6 531.3M689.0 525.0L706.6 526.2L726.7 536.3L774.5 551.4L802.0 558.3M690.3 541.3L691.5 550.1L711.6 553.9L726.7 566.5L777.0 581.6L778.3 582.0M658.8 563.5L694.0 575.3L713.6 582.0M779.6 570.3L802.0 575.2M450.0 561.4L480.2 566.5L535.5 580.3L537.3 582.0M467.6 551.4L482.7 557.7L487.7 567.7M575.8 545.1L600.9 562.7L621.1 562.7M575.8 574.0L589.1 582.0M450.0 477.2L455.0 487.2L482.7 491.0M860.4 381.6L867.9 391.7L903.2 443.2L951.0 511.2L981.2 557.7L997.1 582.0M800.0 353.9L810.1 360.2L815.1 364.0L830.2 369.0L828.9 380.3L837.7 386.6L860.4 391.7L867.9 391.7M839.0 367.7L842.8 372.8L842.8 379.1L852.8 385.4L865.4 390.4M800.0 371.5L812.6 377.8L825.2 386.6L845.3 395.4L860.4 404.2L862.9 413.0L875.5 429.4L888.1 435.7L903.2 443.2M800.0 381.6L815.1 387.9L830.2 397.9L847.8 408.0L852.8 418.1L860.4 425.6L875.5 430.7M800.0 409.3L820.1 423.1L850.3 435.7L883.0 445.8L915.8 460.9M817.6 429.4L850.3 440.7L885.6 455.8L890.6 468.4L905.7 481.0L918.3 497.3L940.9 506.1L951.0 511.2M871.7 436.9L885.6 442.0L885.6 447.0M813.8 449.5L820.1 457.1L855.4 481.0L888.1 496.1L930.9 513.7L940.9 531.3L956.0 538.9L961.0 548.9L981.2 557.7M826.4 470.9L857.9 486.0L890.6 506.1L900.7 517.5L920.8 525.0L923.3 533.8L943.4 541.4L945.9 551.4L971.1 579.1L977.3 582.0M886.8 478.5L900.7 491.0L918.3 497.3M800.0 488.5L820.1 516.2L847.8 533.8L867.9 543.9L895.6 561.5L908.2 581.6L909.0 582.0M800.0 511.2L827.7 531.3L840.3 546.4L867.9 561.5L883.0 569.1L888.1 579.1L894.2 582.0M800.0 528.8L827.7 548.9L842.8 564.0L862.9 574.1L872.9 582.0M800.0 538.9L811.3 546.4L816.4 561.5M800.0 556.5L827.7 569.1L840.3 579.1L846.7 582.0M800.0 574.1L809.9 582.0M909.5 557.7L925.8 581.6L928.0 582.0M150.5 591.3L168.9 589.2L193.5 591.3L242.7 591.3L275.5 608.7L332.9 630.2L357.5 631.3L379.1 640.9L412.9 641.1L450.0 662.0M193.5 580.0L255.0 582.1L285.8 595.4L337.0 592.3L369.8 593.3L398.5 596.4L450.0 621.0M281.7 580.0L288.9 584.1L339.1 582.1L348.3 591.3M392.4 580.0L398.5 585.1L439.5 602.6L450.0 604.6M419.0 580.0L433.4 589.2L450.0 591.3M196.6 613.8L204.8 622.4L230.4 619.0L255.0 620.6L273.5 623.1L306.3 635.4L326.8 641.1L379.1 640.9M219.1 610.3L230.4 619.0M340.1 621.0L357.5 631.3M255.0 633.7L272.5 635.4L283.7 645.6L337.0 651.8L378.0 653.8L414.9 655.4L433.4 651.8M121.8 628.2L134.1 634.3L145.3 645.6L189.4 652.8L214.0 658.9L264.2 657.9L316.5 663.0L367.8 667.1L427.2 667.1L450.0 665.1M258.1 648.1L264.2 657.9M196.6 676.8L242.7 698.5L277.6 696.9L341.1 725.6L369.8 732.7L450.0 749.1M247.8 681.5L275.5 686.2L308.3 687.0L328.8 696.5L347.3 708.8L371.9 712.2L394.4 722.5L419.0 724.5L450.0 730.7M187.4 692.4L201.7 703.0L222.2 713.3L237.6 716.3L267.3 712.2L332.9 743.6L400.6 751.2L427.2 764.1M58.2 708.1L76.7 714.3L103.3 711.8L125.9 718.8L148.4 716.3L173.0 717.8L220.2 729.7L254.0 729.7L300.1 748.5L332.9 743.6M116.6 761.9L255.0 762.5L450.0 764.5M437.5 708.5L450.0 708.5M450.0 592.3L505.4 600.5L532.0 601.5L552.5 609.7L577.1 610.3L591.5 620.0M498.2 590.3L521.8 590.7L532.0 601.5M535.1 580.0L548.4 591.3L591.5 620.0L622.2 622.0L655.0 630.2L700.1 639.5L718.6 652.2M450.0 603.6L460.3 606.2L511.5 614.9L562.8 621.0L593.5 620.4M585.3 580.0L601.7 591.3L618.1 598.5L655.0 606.7L702.2 614.9L728.8 641.5L750.4 655.4L786.2 662.0L802.0 670.5M618.1 580.0L622.2 588.2L638.6 593.3L655.0 594.4L696.0 601.5L737.0 612.8L769.8 623.1L802.0 628.4M679.6 580.0L696.0 589.2L757.5 597.4L802.0 605.4M706.3 580.0L732.9 590.3L769.8 600.5L802.0 605.5M776.0 580.0L786.2 582.1L802.0 592.9M667.3 620.4L716.5 628.6M579.2 629.8L622.2 633.7L642.7 641.9L669.4 642.5L688.9 652.2M664.2 653.4L716.5 652.2L750.4 655.4M450.0 621.0L470.5 630.2L519.7 637.4L564.8 652.2L593.5 658.5L624.3 658.9L653.0 667.1L683.7 683.5L722.7 705.1L778.0 713.3L802.0 720.1M776.0 637.4L802.0 652.3M450.0 663.0L454.1 665.1L482.8 668.2L536.1 682.5L564.8 694.8L614.0 704.0L636.6 716.3L663.2 713.3M586.3 688.7L616.1 688.7L685.8 724.5L741.1 744.0L773.9 752.2L798.5 767.0M456.2 693.8L507.4 705.1L532.0 717.4L560.7 720.4L581.2 730.7M450.0 708.1L463.3 708.1L484.9 718.4L509.5 721.5L532.0 717.4M585.3 715.3L605.8 719.4L636.6 716.3M450.0 730.7L462.3 733.4L501.3 733.8L548.4 734.8L581.2 730.7L614.0 734.2L655.0 731.7L679.6 742.0L716.5 753.2L741.1 766.6M450.0 749.1L472.6 764.5M450.0 764.5L802.0 766.7M996.8 580.0L1007.1 596.4L1046.1 653.8L1126.0 769.1M974.3 580.0L1006.1 595.4M982.5 594.4L994.8 616.9L1014.3 638.4L1042.0 646.0M927.1 580.0L947.6 588.2L964.0 598.5L964.0 608.7L974.3 621.0L988.6 637.4L1019.4 657.9L1042.0 672.3L1066.6 682.5M906.6 580.0L910.7 584.1L927.1 591.3L943.5 602.6L964.0 608.7M886.1 580.0L892.3 584.1L908.7 592.3L923.0 604.6L943.5 616.9L962.0 647.7L988.6 656.9L1011.2 670.2L1042.0 686.6L1048.1 703.0L1066.6 719.4L1099.4 731.7M865.6 580.0L869.7 586.2L886.1 594.4L908.7 610.8L933.3 631.3L964.0 653.8L984.5 668.2L1011.2 681.5L1017.3 692.8L1048.1 703.0M844.1 580.0L861.5 595.4L880.0 614.9L896.4 629.2L904.6 642.5L923.0 655.9L953.8 670.2L974.3 678.4L988.6 686.6L1017.3 692.8M806.2 580.0L810.3 584.1L830.8 591.3L853.3 604.6L877.9 614.9L898.4 627.2L904.6 642.5M800.0 592.3L826.7 600.5L832.8 610.8L849.2 626.1L880.0 635.4L904.6 642.5M872.8 623.1L880.0 635.4M800.0 605.6L808.2 606.7L818.5 619.0L830.8 633.3L851.3 649.7L884.1 666.1L912.8 684.6L941.5 693.8L959.9 707.1L996.8 719.4L1025.5 735.8L1056.3 752.2L1091.2 769.1M800.0 615.9L818.5 619.0M800.0 627.2L828.7 633.3M800.0 649.7L820.5 662.0L847.2 674.3L861.5 686.6L892.3 696.9L921.0 705.1L957.9 707.1M800.0 670.2L810.3 676.4L861.5 686.6M842.0 697.9L888.2 708.2L918.9 721.5L943.5 720.5L972.2 724.6L992.7 735.8L1017.3 748.1L1058.4 769.1M1017.3 708.2L1039.9 719.4L1062.5 731.7L1091.2 752.2L1119.9 759.4M800.0 717.4L841.0 729.7L851.3 731.7L908.7 738.3L966.1 737.9L996.8 752.2L1023.5 769.1M933.3 752.6L994.8 753.3M800.0 767.0L1126.0 769.1" stroke="#1530e0" stroke-width="1.05" fill="none" stroke-linejoin="round" stroke-linecap="round"/><path d="M345.6 344.6L346.9 347.6L364.5 352.6L382.1 361.4L402.2 371.5L414.8 381.6L427.4 386.6L450.0 396.7M336.3 357.2L351.9 359.7L364.5 367.2L377.0 369.0L389.6 375.3L397.2 380.3L414.8 381.6M344.8 367.7L359.4 371.5L377.0 374.0L379.6 379.1L392.1 382.8L414.8 384.1M429.4 379.8L427.4 386.6M320.4 377.3L317.9 381.6L334.3 390.4L364.5 399.2L394.7 410.5L397.2 415.5L404.7 420.6M332.3 375.8L335.5 381.6L359.4 390.4L392.1 400.4L408.5 405.5L412.3 410.5L422.3 415.5L450.0 423.1M359.9 382.1L369.5 387.9L392.1 391.6L406.0 397.9L409.7 405.5M392.1 389.1L414.8 392.9L450.0 403.0M304.1 396.7L306.6 399.9L333.0 409.2L336.8 413.0L361.9 423.1L377.0 429.4L385.8 429.4M297.8 406.0L314.2 409.2L336.8 414.3L350.6 420.6L367.0 429.4M296.0 409.2L321.7 416.8L344.3 428.1L363.2 445.7L379.6 448.2L385.8 460.8L414.8 467.1L450.0 480.9M365.7 408.0L368.2 416.8L374.5 423.1L384.6 424.3L387.1 430.6L400.9 442.7L414.8 443.2M405.2 415.5L402.2 423.1L406.0 430.6L414.8 436.9L414.8 443.2M380.8 442.7L397.2 446.2L424.8 448.2L450.0 463.3M396.7 452.0L398.4 457.0L417.3 460.8L450.0 478.4M438.7 408.5L441.2 413.0L450.0 416.8M275.9 433.9L284.0 435.2L287.7 440.7L316.7 448.2L338.1 453.3L339.3 457.0L364.5 475.9L372.0 482.2L394.7 488.5L403.5 496.0L450.0 503.6M314.2 431.9L321.7 434.4L330.5 444.5L344.3 447.0L351.9 453.3L364.5 454.5L367.5 460.8L377.0 467.1L397.2 470.9L416.0 472.1L450.0 488.5M323.7 456.3L336.8 457.0M431.1 484.7L434.9 487.2L450.0 488.5M424.8 506.1L438.7 514.9L450.0 518.7M232.4 488.5L243.7 488.0L256.3 494.8L281.4 506.1L287.7 516.2L307.9 516.7L314.2 525.0L339.3 545.1L372.0 556.4L397.2 571.5L415.2 582.0M236.2 484.0L243.7 487.2M256.3 480.9L271.4 489.7L299.1 502.3L307.9 516.2M236.7 511.6L266.4 523.7L271.4 532.5L296.5 533.3L314.2 540.1L320.4 546.9L346.9 561.4L367.0 567.7L389.6 581.6L390.7 582.0M275.2 539.6L291.5 542.6L300.3 547.6L320.4 546.9M282.7 549.4L319.2 563.5M271.4 556.4L299.1 555.7M301.1 564.5L349.4 561.9L364.5 566.5M356.9 525.5L384.6 537.5L419.8 547.6L422.3 555.2L450.0 560.2M164.5 575.3L211.0 581.6L226.4 582.0M232.9 572.8L256.3 574.5L276.4 579.1L283.8 582.0M450.0 346.4L457.5 355.2L492.8 362.7L512.9 372.8L530.5 382.8L563.2 391.6L585.8 405.5L600.9 418.1L626.1 428.1L641.2 435.7L666.4 460.8L681.4 465.8L709.1 486.0L726.7 496.0L751.9 506.1L779.6 511.1L797.2 526.2L802.0 529.0M470.1 350.6L497.8 360.2L502.8 375.3L504.1 387.9L533.0 397.9L570.8 410.5L595.9 423.1L626.1 430.6L641.2 440.7L673.9 468.4L701.6 480.9L714.2 496.0L756.9 521.2L799.7 538.8L802.0 542.0M524.2 344.6L538.1 351.4L558.2 360.2L574.5 371.5L569.5 382.8M523.0 351.4L525.5 358.9L533.0 367.7L545.6 374.0L568.2 382.8L583.3 390.4L595.9 395.4L626.1 413.0L651.3 424.3M564.5 344.6L565.7 350.1L563.2 356.4L580.8 362.7L593.4 362.7L594.7 355.2L590.9 350.1L578.3 345.1M563.2 356.4L590.9 367.7L621.1 377.8L636.2 385.3L646.2 395.4L651.3 403.0L663.8 413.0L668.9 425.6L684.0 438.2L701.6 455.8L724.2 470.9L751.9 486.0L779.6 503.6M592.1 372.8L611.0 379.1L626.1 390.4L628.6 397.9L651.3 409.2L651.3 423.1M646.2 364.0L646.2 367.7L668.9 379.1L689.0 387.9L714.2 397.9L734.3 408.0L751.9 418.1L756.9 428.1L770.8 434.4M670.1 386.6L696.5 394.2L709.1 400.4L726.7 410.5L735.5 413.0M689.0 345.6L699.1 351.4L704.1 348.9L699.1 355.2L711.6 370.3L716.7 387.9L729.2 395.4L734.3 413.0M728.7 367.7L724.2 375.3L729.2 392.9M736.8 345.1L761.9 353.9L769.5 362.7L787.1 370.3L802.0 377.0M743.1 369.7L749.4 372.8L750.6 384.1L759.4 390.4L758.2 405.5L769.5 413.0L784.6 425.6L799.7 450.8L797.2 458.3L795.9 483.5L802.0 500.5M764.5 385.3L777.0 389.1L792.1 395.4L793.4 406.7L802.0 410.4M788.4 348.1L802.0 354.2M785.8 365.2L802.0 372.8M706.6 410.5L704.1 414.3L711.6 420.6L716.7 445.7L736.8 455.8L774.5 468.4L785.8 493.5L802.0 500.5M702.8 429.4L714.2 431.9M779.6 457.0L782.1 467.1L795.9 473.4M717.9 463.3L739.3 470.9L749.4 480.9L763.2 483.5L764.5 475.9M471.4 387.4L487.7 394.2L494.0 403.0L510.4 409.2L507.9 418.1M450.0 396.7L475.2 405.5L500.3 420.6L520.4 425.6L525.5 430.6L553.1 445.7L580.8 465.8L600.9 475.9L651.3 491.0L671.4 506.1L701.6 521.2L726.7 536.3L764.5 548.9L802.0 558.3M450.0 403.0L482.7 415.5L502.8 423.1L512.9 430.6L558.2 448.2L585.8 458.3L608.5 475.9L641.2 493.5L671.4 506.1M525.5 418.1L548.1 421.8L575.8 433.1L585.8 440.7L595.9 450.8L626.1 458.3L641.2 468.4L663.8 475.9L681.4 486.0M595.9 438.2L606.0 444.5L613.5 444.5L636.2 455.8L673.9 468.4M634.9 447.0L651.3 453.3L656.3 453.3M578.3 448.2L595.9 455.8L603.5 468.4M450.0 416.8L470.1 438.2L507.9 448.2L540.6 488.5L580.8 506.1L618.6 526.2L651.3 538.8L671.4 546.4L681.4 561.4L696.5 576.5M521.7 445.7L543.1 488.5M450.0 464.6L470.1 475.9L482.7 491.0L523.0 503.6L573.3 526.2L583.3 541.3L626.1 561.4L676.4 581.6L677.4 582.0M450.0 507.4L462.6 513.6L482.7 523.7L512.9 548.9L573.3 561.4L613.5 581.6L613.8 582.0M482.7 499.8L515.4 508.6L520.4 516.2L570.8 526.2L618.6 528.7L651.3 538.8M554.4 503.6L575.8 511.1L613.5 526.2L623.6 531.3M689.0 525.0L706.6 526.2L726.7 536.3L774.5 551.4L802.0 558.3M690.3 541.3L691.5 550.1L711.6 553.9L726.7 566.5L777.0 581.6L778.3 582.0M658.8 563.5L694.0 575.3L713.6 582.0M779.6 570.3L802.0 575.2M450.0 561.4L480.2 566.5L535.5 580.3L537.3 582.0M467.6 551.4L482.7 557.7L487.7 567.7M575.8 545.1L600.9 562.7L621.1 562.7M575.8 574.0L589.1 582.0M450.0 477.2L455.0 487.2L482.7 491.0M860.4 381.6L867.9 391.7L903.2 443.2L951.0 511.2L981.2 557.7L997.1 582.0M800.0 353.9L810.1 360.2L815.1 364.0L830.2 369.0L828.9 380.3L837.7 386.6L860.4 391.7L867.9 391.7M839.0 367.7L842.8 372.8L842.8 379.1L852.8 385.4L865.4 390.4M800.0 371.5L812.6 377.8L825.2 386.6L845.3 395.4L860.4 404.2L862.9 413.0L875.5 429.4L888.1 435.7L903.2 443.2M800.0 381.6L815.1 387.9L830.2 397.9L847.8 408.0L852.8 418.1L860.4 425.6L875.5 430.7M800.0 409.3L820.1 423.1L850.3 435.7L883.0 445.8L915.8 460.9M817.6 429.4L850.3 440.7L885.6 455.8L890.6 468.4L905.7 481.0L918.3 497.3L940.9 506.1L951.0 511.2M871.7 436.9L885.6 442.0L885.6 447.0M813.8 449.5L820.1 457.1L855.4 481.0L888.1 496.1L930.9 513.7L940.9 531.3L956.0 538.9L961.0 548.9L981.2 557.7M826.4 470.9L857.9 486.0L890.6 506.1L900.7 517.5L920.8 525.0L923.3 533.8L943.4 541.4L945.9 551.4L971.1 579.1L977.3 582.0M886.8 478.5L900.7 491.0L918.3 497.3M800.0 488.5L820.1 516.2L847.8 533.8L867.9 543.9L895.6 561.5L908.2 581.6L909.0 582.0M800.0 511.2L827.7 531.3L840.3 546.4L867.9 561.5L883.0 569.1L888.1 579.1L894.2 582.0M800.0 528.8L827.7 548.9L842.8 564.0L862.9 574.1L872.9 582.0M800.0 538.9L811.3 546.4L816.4 561.5M800.0 556.5L827.7 569.1L840.3 579.1L846.7 582.0M800.0 574.1L809.9 582.0M909.5 557.7L925.8 581.6L928.0 582.0M150.5 591.3L168.9 589.2L193.5 591.3L242.7 591.3L275.5 608.7L332.9 630.2L357.5 631.3L379.1 640.9L412.9 641.1L450.0 662.0M193.5 580.0L255.0 582.1L285.8 595.4L337.0 592.3L369.8 593.3L398.5 596.4L450.0 621.0M281.7 580.0L288.9 584.1L339.1 582.1L348.3 591.3M392.4 580.0L398.5 585.1L439.5 602.6L450.0 604.6M419.0 580.0L433.4 589.2L450.0 591.3M196.6 613.8L204.8 622.4L230.4 619.0L255.0 620.6L273.5 623.1L306.3 635.4L326.8 641.1L379.1 640.9M219.1 610.3L230.4 619.0M340.1 621.0L357.5 631.3M255.0 633.7L272.5 635.4L283.7 645.6L337.0 651.8L378.0 653.8L414.9 655.4L433.4 651.8M121.8 628.2L134.1 634.3L145.3 645.6L189.4 652.8L214.0 658.9L264.2 657.9L316.5 663.0L367.8 667.1L427.2 667.1L450.0 665.1M258.1 648.1L264.2 657.9M196.6 676.8L242.7 698.5L277.6 696.9L341.1 725.6L369.8 732.7L450.0 749.1M247.8 681.5L275.5 686.2L308.3 687.0L328.8 696.5L347.3 708.8L371.9 712.2L394.4 722.5L419.0 724.5L450.0 730.7M187.4 692.4L201.7 703.0L222.2 713.3L237.6 716.3L267.3 712.2L332.9 743.6L400.6 751.2L427.2 764.1M58.2 708.1L76.7 714.3L103.3 711.8L125.9 718.8L148.4 716.3L173.0 717.8L220.2 729.7L254.0 729.7L300.1 748.5L332.9 743.6M116.6 761.9L255.0 762.5L450.0 764.5M437.5 708.5L450.0 708.5M450.0 592.3L505.4 600.5L532.0 601.5L552.5 609.7L577.1 610.3L591.5 620.0M498.2 590.3L521.8 590.7L532.0 601.5M535.1 580.0L548.4 591.3L591.5 620.0L622.2 622.0L655.0 630.2L700.1 639.5L718.6 652.2M450.0 603.6L460.3 606.2L511.5 614.9L562.8 621.0L593.5 620.4M585.3 580.0L601.7 591.3L618.1 598.5L655.0 606.7L702.2 614.9L728.8 641.5L750.4 655.4L786.2 662.0L802.0 670.5M618.1 580.0L622.2 588.2L638.6 593.3L655.0 594.4L696.0 601.5L737.0 612.8L769.8 623.1L802.0 628.4M679.6 580.0L696.0 589.2L757.5 597.4L802.0 605.4M706.3 580.0L732.9 590.3L769.8 600.5L802.0 605.5M776.0 580.0L786.2 582.1L802.0 592.9M667.3 620.4L716.5 628.6M579.2 629.8L622.2 633.7L642.7 641.9L669.4 642.5L688.9 652.2M664.2 653.4L716.5 652.2L750.4 655.4M450.0 621.0L470.5 630.2L519.7 637.4L564.8 652.2L593.5 658.5L624.3 658.9L653.0 667.1L683.7 683.5L722.7 705.1L778.0 713.3L802.0 720.1M776.0 637.4L802.0 652.3M450.0 663.0L454.1 665.1L482.8 668.2L536.1 682.5L564.8 694.8L614.0 704.0L636.6 716.3L663.2 713.3M586.3 688.7L616.1 688.7L685.8 724.5L741.1 744.0L773.9 752.2L798.5 767.0M456.2 693.8L507.4 705.1L532.0 717.4L560.7 720.4L581.2 730.7M450.0 708.1L463.3 708.1L484.9 718.4L509.5 721.5L532.0 717.4M585.3 715.3L605.8 719.4L636.6 716.3M450.0 730.7L462.3 733.4L501.3 733.8L548.4 734.8L581.2 730.7L614.0 734.2L655.0 731.7L679.6 742.0L716.5 753.2L741.1 766.6M450.0 749.1L472.6 764.5M450.0 764.5L802.0 766.7M996.8 580.0L1007.1 596.4L1046.1 653.8L1126.0 769.1M974.3 580.0L1006.1 595.4M982.5 594.4L994.8 616.9L1014.3 638.4L1042.0 646.0M927.1 580.0L947.6 588.2L964.0 598.5L964.0 608.7L974.3 621.0L988.6 637.4L1019.4 657.9L1042.0 672.3L1066.6 682.5M906.6 580.0L910.7 584.1L927.1 591.3L943.5 602.6L964.0 608.7M886.1 580.0L892.3 584.1L908.7 592.3L923.0 604.6L943.5 616.9L962.0 647.7L988.6 656.9L1011.2 670.2L1042.0 686.6L1048.1 703.0L1066.6 719.4L1099.4 731.7M865.6 580.0L869.7 586.2L886.1 594.4L908.7 610.8L933.3 631.3L964.0 653.8L984.5 668.2L1011.2 681.5L1017.3 692.8L1048.1 703.0M844.1 580.0L861.5 595.4L880.0 614.9L896.4 629.2L904.6 642.5L923.0 655.9L953.8 670.2L974.3 678.4L988.6 686.6L1017.3 692.8M806.2 580.0L810.3 584.1L830.8 591.3L853.3 604.6L877.9 614.9L898.4 627.2L904.6 642.5M800.0 592.3L826.7 600.5L832.8 610.8L849.2 626.1L880.0 635.4L904.6 642.5M872.8 623.1L880.0 635.4M800.0 605.6L808.2 606.7L818.5 619.0L830.8 633.3L851.3 649.7L884.1 666.1L912.8 684.6L941.5 693.8L959.9 707.1L996.8 719.4L1025.5 735.8L1056.3 752.2L1091.2 769.1M800.0 615.9L818.5 619.0M800.0 627.2L828.7 633.3M800.0 649.7L820.5 662.0L847.2 674.3L861.5 686.6L892.3 696.9L921.0 705.1L957.9 707.1M800.0 670.2L810.3 676.4L861.5 686.6M842.0 697.9L888.2 708.2L918.9 721.5L943.5 720.5L972.2 724.6L992.7 735.8L1017.3 748.1L1058.4 769.1M1017.3 708.2L1039.9 719.4L1062.5 731.7L1091.2 752.2L1119.9 759.4M800.0 717.4L841.0 729.7L851.3 731.7L908.7 738.3L966.1 737.9L996.8 752.2L1023.5 769.1M933.3 752.6L994.8 753.3M800.0 767.0L1126.0 769.1" stroke="url(#tg)" stroke-width="1.05" fill="none" stroke-linejoin="round" stroke-linecap="round"/><defs><pattern id="meshp" patternUnits="userSpaceOnUse" width="5" height="4.3" patternTransform="rotate(-12)"><rect width="5" height="4.3" fill="#6a6a6e"/><path d="M0 0H5M0 4.3H5M0 0L2.5 4.3L5 0M-2.5 4.3L0 0" stroke="#404042" stroke-width="0.8" fill="none"/></pattern></defs><g fill="url(#meshp)" stroke="#4a4a4c" stroke-width="0.6"><path d="M804.2 884.0L891.9 881.4L985.0 882.1L1040.6 885.9L1107.6 891.9L1108.4 880.8L1041.2 877.4L985.0 875.7L891.8 878.2L804.2 883.1Z"/><path d="M809.6 834.6L835.7 845.5L891.7 853.2L947.4 852.4L964.4 861.7L983.6 875.5L1021.7 882.0L1077.8 886.7L1078.6 876.7L1022.8 872.1L986.3 867.4L968.3 855.2L948.1 845.7L891.9 848.7L836.1 843.4L810.0 833.7Z"/><path d="M917.0 867.2L948.0 867.0L958.4 867.0L974.5 872.0L976.9 863.5L959.4 859.2L947.5 861.0L916.9 866.4Z"/><path d="M833.9 808.6L881.9 824.6L902.6 835.5L925.3 833.2L952.2 837.4L973.6 850.7L1002.0 868.5L1058.4 882.6L1095.8 889.1L1097.8 878.0L1060.7 871.5L1005.2 859.5L977.7 843.8L954.4 830.9L925.4 827.7L903.4 831.0L883.1 821.4L834.2 807.5Z"/><path d="M828.0 776.9L844.7 792.4L902.3 816.3L932.3 817.0L960.9 826.8L1001.0 850.0L1029.2 867.7L1067.2 879.4L1095.4 886.0L1098.2 873.7L1070.5 867.2L1034.0 856.6L1006.2 840.8L964.3 819.2L933.3 810.3L903.7 811.1L845.7 790.3L828.9 775.9Z"/><path d="M861.8 769.2L894.7 792.8L924.1 806.8L938.7 816.9L941.8 812.3L926.6 801.9L896.4 789.9L862.2 768.7Z"/><path d="M897.0 750.9L933.6 776.4L961.5 792.4L989.3 800.8L1017.7 812.4L1046.0 839.0L1073.8 863.8L1096.4 880.7L1104.7 869.6L1082.5 853.0L1054.4 829.4L1023.1 803.8L991.8 793.0L963.8 786.5L935.8 772.7L897.8 749.7Z"/><path d="M934.6 744.1L965.4 759.2L984.6 780.2L993.2 794.3L991.4 796.7L997.2 799.0L999.1 792.1L989.1 776.4L967.3 756.3L934.8 743.5Z"/><path d="M966.1 736.6L991.3 757.2L1010.4 781.8L1018.9 801.7L1018.7 808.1L1025.8 808.1L1025.6 799.5L1015.5 778.4L993.6 754.7L966.6 736.1Z"/><path d="M992.0 737.0L1006.7 747.1L1020.9 752.2L1027.2 763.0L1037.4 783.9L1042.5 795.5L1063.3 834.0L1081.4 862.8L1096.5 881.8L1108.3 872.3L1093.6 854.0L1074.4 826.9L1050.5 790.9L1044.4 780.1L1032.2 760.0L1023.6 748.4L1008.0 744.2L992.8 735.7Z"/><path d="M1011.0 729.9L1020.9 751.0L1023.6 749.6L1011.2 729.7Z"/><path d="M996.9 819.8L1021.1 832.5L1047.7 852.8L1065.8 867.2L1090.1 880.7L1096.1 869.6L1072.0 857.0L1052.8 845.4L1023.4 828.4L997.4 818.7Z"/></g><path d="M1040 861L1076 871L1058 850L1088 850L1094.5 860.5L1103 871.8L1107 879L1109.6 887.7L1108 892L1100 893.5L1070 893L1040 889.5Z" fill="url(#meshp)"/><ellipse cx="1098" cy="881" rx="11" ry="8" fill="url(#meshp)"/></g></svg><div class="a" style="left:0px;top:0px;width:1223px;height:42px;background:#3c3d3d;"></div><div class="a" style="left:29px;top:0px;width:989px;height:34px;background:#3a3b3b;border-left:1px solid #0c0c0c;border-bottom:1px solid #0c0c0c;"></div><div class="a" style="left:999px;top:0px;width:18px;height:33px;background:#333434;border-left:1px solid #2a2a2a"></div><svg class="a" style="left:1003px;top:11px" width="10" height="9"><path d="M0 0H10L5 9Z" fill="#8a8a8a"/></svg><div class="a" style="left:0px;top:41px;width:1223px;height:2px;background:#080808;"></div><div class="a" style="left:0px;top:43px;width:1223px;height:2px;background:#6a6a6a;"></div><div class="a" style="left:0px;top:45px;width:1223px;height:46px;background:#2e2f2f;"></div><div class="a" style="left:0px;top:91px;width:1223px;height:1px;background:#050505;"></div><div class="a" style="left:1183px;top:92px;width:40px;height:978px;background:#383838;"></div><div class="a" style="left:1183px;top:92px;width:40px;height:15px;background:linear-gradient(#505050,#383838);border-left:1px solid #6a6a6a;border-bottom:1px solid #111"></div><svg class="a" style="left:1210px;top:94px" width="10" height="10"><path d="M0 0L10 5L0 10Z" fill="#000"/></svg><div class="a" style="left:0px;top:1070px;width:1223px;height:3px;background:#3c3c3c;border-top:1px solid #4a4a4a"></div><div class="a" style="left:1223px;top:0px;width:1px;height:1073px;background:#070707;"></div><div class="a" style="left:1224px;top:0px;width:8px;height:1073px;background:#48494a;"></div><svg class="a" style="left:1224px;top:470px" width="8" height="102"><path d="M6 1.5V9.5L1.5 5.5Z" fill="#8a8a8a"/><path d="M1.5 91V99.5L6 95.2Z" fill="#8a8a8a"/><rect x="1.9" y="36.0" width="1.6" height="1.6" fill="#a0a0a0"/><rect x="5.2" y="36.0" width="1.6" height="1.6" fill="#a0a0a0"/><rect x="1.9" y="39.55" width="1.6" height="1.6" fill="#a0a0a0"/><rect x="5.2" y="39.55" width="1.6" height="1.6" fill="#a0a0a0"/><rect x="1.9" y="43.1" width="1.6" height="1.6" fill="#a0a0a0"/><rect x="5.2" y="43.1" width="1.6" height="1.6" fill="#a0a0a0"/><rect x="1.9" y="46.65" width="1.6" height="1.6" fill="#a0a0a0"/><rect x="5.2" y="46.65" width="1.6" height="1.6" fill="#a0a0a0"/><rect x="1.9" y="50.2" width="1.6" height="1.6" fill="#a0a0a0"/><rect x="5.2" y="50.2" width="1.6" height="1.6" fill="#a0a0a0"/><rect x="1.9" y="53.75" width="1.6" height="1.6" fill="#a0a0a0"/><rect x="5.2" y="53.75" width="1.6" height="1.6" fill="#a0a0a0"/><rect x="1.9" y="57.3" width="1.6" height="1.6" fill="#a0a0a0"/><rect x="5.2" y="57.3" width="1.6" height="1.6" fill="#a0a0a0"/><rect x="1.9" y="60.849999999999994" width="1.6" height="1.6" fill="#a0a0a0"/><rect x="5.2" y="60.849999999999994" width="1.6" height="1.6" fill="#a0a0a0"/></svg><div class="a" style="left:1232px;top:0px;width:876px;height:52px;background:#3d3e3e;"></div><div class="a" style="left:1232px;top:52px;width:876px;height:1px;background:#050505;"></div><div class="a" style="left:1232px;top:53px;width:876px;height:38px;background:#363737;"></div><div class="a" style="left:1232px;top:91px;width:876px;height:1px;background:#050505;"></div><div class="a" style="left:1234px;top:53px;width:13px;height:38px;background:linear-gradient(#4c4c4c,#3c3c3c);border-left:1px solid #666"></div><div class="a" style="left:1247px;top:53px;width:1px;height:38px;background:#000;"></div><div class="a" style="left:1248px;top:53px;width:1px;height:38px;background:#5a5a5a;"></div><svg class="a" style="left:1236px;top:55px" width="9" height="8"><path d="M4.5 0L9 8H0Z" fill="#000"/></svg><svg class="a" style="left:1258px;top:69px" width="8" height="8"><path d="M8 0V8L0 4Z" fill="#404040"/></svg><div class="a" style="left:1315px;top:8px;width:714px;height:35px;background:#3a3b3b;border:1px solid #0c0c0c;border-right:1px solid #222"></div><div class="a" style="left:2009px;top:9px;width:19px;height:33px;background:#333434;"></div><svg class="a" style="left:2013px;top:21px" width="10" height="9"><path d="M0 0H10L5 9Z" fill="#8a8a8a"/></svg><svg width="2108" height="1073" style="left:0;top:0"><defs><clipPath id="nclip"><rect x="1232" y="92" width="876" height="981"/></clipPath><filter id="gb" x="-50%" y="-80%" width="200%" height="260%"><feGaussianBlur stdDeviation="5"/></filter><filter id="gb2" x="-50%" y="-80%" width="200%" height="260%"><feGaussianBlur stdDeviation="2.5"/></filter></defs><g clip-path="url(#nclip)"><rect x="1232" y="92" width="876" height="981" fill="#323230"/><path d="M1232 170.2H2108M1232 271.8H2108M1232 373.3H2108M1232 474.8H2108M1232 576.4H2108M1232 678.0H2108M1232 779.5H2108M1232 881.0H2108M1232 982.6H2108M1293.0 92V1073M1495.9 92V1073M1698.8 92V1073M1901.7 92V1073M2104.6 92V1073" stroke="#39393a" stroke-width="2" fill="none"/><text x="1248.0" y="139.0" font-family="Liberation Sans, sans-serif" font-size="31.88" fill="#2f4a55" textLength="189.0" lengthAdjust="spacingAndGlyphs" >Profile 2: Time</text><text x="1930.0" y="147.0" font-family="Liberation Sans, sans-serif" font-size="37.68" fill="#4b4b4b" font-weight="bold" textLength="165.0" lengthAdjust="spacingAndGlyphs" >Geometry</text><path d="M1645.5 109.0L1753.1 109.0L1778.0 122.6L1795.3 149.9L1795.3 192.1L1778.0 219.4L1753.1 233.0L1645.5 233.0L1620.6 219.4L1603.3 192.1L1603.3 149.9L1620.6 122.6Z" fill="#4a2929" stroke="#4a2929" stroke-width="2" stroke-linejoin="round"/><path d="M1650.0 115.0L1748.6 115.0L1771.5 127.3L1787.3 152.0L1787.3 190.0L1771.5 214.7L1748.6 227.0L1650.0 227.0L1627.1 214.7L1611.3 190.0L1611.3 152.0L1627.1 127.3Z" fill="#552626" stroke="#552626" stroke-width="2" stroke-linejoin="round"/><path d="M1655.1 121.0L1743.5 121.0L1764.1 132.0L1778.3 154.0L1778.3 188.0L1764.1 210.0L1743.5 221.0L1655.1 221.0L1634.5 210.0L1620.3 188.0L1620.3 154.0L1634.5 132.0Z" fill="#632121" stroke="#632121" stroke-width="2" stroke-linejoin="round"/><path d="M1660.1 128.0L1738.5 128.0L1756.7 137.5L1769.3 156.4L1769.3 185.6L1756.7 204.5L1738.5 214.0L1660.1 214.0L1641.9 204.5L1629.3 185.6L1629.3 156.4L1641.9 137.5Z" fill="#731c1c" stroke="#731c1c" stroke-width="2" stroke-linejoin="round"/><path d="M1665.1 134.0L1733.5 134.0L1749.3 142.1L1760.3 158.4L1760.3 183.6L1749.3 199.9L1733.5 208.0L1665.1 208.0L1649.3 199.9L1638.3 183.6L1638.3 158.4L1649.3 142.1Z" fill="#861818" stroke="#861818" stroke-width="2" stroke-linejoin="round"/><path d="M1670.2 140.0L1728.4 140.0L1741.9 146.8L1751.3 160.5L1751.3 181.5L1741.9 195.2L1728.4 202.0L1670.2 202.0L1656.7 195.2L1647.3 181.5L1647.3 160.5L1656.7 146.8Z" fill="#a01010" stroke="#a01010" stroke-width="2" stroke-linejoin="round"/><path d="M1674.1 146.0L1724.5 146.0L1736.2 151.5L1744.3 162.5L1744.3 179.5L1736.2 190.5L1724.5 196.0L1674.1 196.0L1662.4 190.5L1654.3 179.5L1654.3 162.5L1662.4 151.5Z" fill="#b00c0c" stroke="#b00c0c" stroke-width="2" stroke-linejoin="round"/><path d="M1453.3 447.0L1539.7 447.0L1550.5 452.8L1556.5 462.9L1556.5 489.1L1550.5 499.2L1539.7 505.0L1453.3 505.0L1442.5 499.2L1436.5 489.1L1436.5 462.9L1442.5 452.8Z" fill="#353b2f" stroke="#353b2f" stroke-width="1.5" stroke-linejoin="round"/><path d="M1454.3 449.0L1538.7 449.0L1549.3 454.4L1555.2 463.9L1555.2 488.1L1549.3 497.6L1538.7 503.0L1454.3 503.0L1443.7 497.6L1437.8 488.1L1437.8 463.9L1443.7 454.4Z" fill="#39472d" stroke="#39472d" stroke-width="1.5" stroke-linejoin="round"/><path d="M1455.2 451.0L1537.8 451.0L1548.1 456.0L1553.8 464.8L1553.8 487.2L1548.1 496.0L1537.8 501.0L1455.2 501.0L1444.9 496.0L1439.2 487.2L1439.2 464.8L1444.9 456.0Z" fill="#3e562b" stroke="#3e562b" stroke-width="1.5" stroke-linejoin="round"/><path d="M1456.2 453.0L1536.8 453.0L1546.9 457.6L1552.5 465.6L1552.5 486.4L1546.9 494.4L1536.8 499.0L1456.2 499.0L1446.1 494.4L1440.5 486.4L1440.5 465.6L1446.1 457.6Z" fill="#436629" stroke="#436629" stroke-width="1.5" stroke-linejoin="round"/><path d="M1457.1 455.0L1535.9 455.0L1545.7 459.2L1551.2 466.6L1551.2 485.4L1545.7 492.8L1535.9 497.0L1457.1 497.0L1447.3 492.8L1441.8 485.4L1441.8 466.6L1447.3 459.2Z" fill="#497727" stroke="#497727" stroke-width="1.5" stroke-linejoin="round"/><path d="M1458.1 457.0L1534.9 457.0L1544.5 460.8L1549.8 467.4L1549.8 484.6L1544.5 491.2L1534.9 495.0L1458.1 495.0L1448.5 491.2L1443.2 484.6L1443.2 467.4L1448.5 460.8Z" fill="#4f8a24" stroke="#4f8a24" stroke-width="1.5" stroke-linejoin="round"/><path d="M1451.4 540.0L1540.6 540.0L1551.8 545.4L1558.0 554.9L1558.0 579.1L1551.8 588.6L1540.6 594.0L1451.4 594.0L1440.2 588.6L1434.0 579.1L1434.0 554.9L1440.2 545.4Z" fill="#33352f" stroke="#33352f" stroke-width="1.5" stroke-linejoin="round"/><path d="M1452.2 541.7L1539.8 541.7L1550.8 546.7L1556.8 555.6L1556.8 578.4L1550.8 587.3L1539.8 592.3L1452.2 592.3L1441.2 587.3L1435.2 578.4L1435.2 555.6L1441.2 546.7Z" fill="#343a2e" stroke="#343a2e" stroke-width="1.5" stroke-linejoin="round"/><path d="M1453.0 543.3L1539.0 543.3L1549.7 548.1L1555.7 556.4L1555.7 577.6L1549.7 585.9L1539.0 590.7L1453.0 590.7L1442.3 585.9L1436.3 577.6L1436.3 556.4L1442.3 548.1Z" fill="#35402d" stroke="#35402d" stroke-width="1.5" stroke-linejoin="round"/><path d="M1453.9 545.0L1538.1 545.0L1548.7 549.4L1554.5 557.1L1554.5 576.9L1548.7 584.6L1538.1 589.0L1453.9 589.0L1443.3 584.6L1437.5 576.9L1437.5 557.1L1443.3 549.4Z" fill="#36462c" stroke="#36462c" stroke-width="1.5" stroke-linejoin="round"/><path d="M1454.7 546.7L1537.3 546.7L1547.6 550.7L1553.3 557.9L1553.3 576.1L1547.6 583.3L1537.3 587.3L1454.7 587.3L1444.4 583.3L1438.7 576.1L1438.7 557.9L1444.4 550.7Z" fill="#374d2a" stroke="#374d2a" stroke-width="1.5" stroke-linejoin="round"/><path d="M1455.6 548.3L1536.4 548.3L1546.5 552.1L1552.2 558.6L1552.2 575.4L1546.5 581.9L1536.4 585.7L1455.6 585.7L1445.5 581.9L1439.8 575.4L1439.8 558.6L1445.5 552.1Z" fill="#395429" stroke="#395429" stroke-width="1.5" stroke-linejoin="round"/><path d="M1434.4 641.5L1523.6 641.5L1534.8 646.9L1541.0 656.4L1541.0 680.6L1534.8 690.1L1523.6 695.5L1434.4 695.5L1423.2 690.1L1417.0 680.6L1417.0 656.4L1423.2 646.9Z" fill="#33352f" stroke="#33352f" stroke-width="1.5" stroke-linejoin="round"/><path d="M1435.2 643.2L1522.8 643.2L1533.8 648.2L1539.8 657.1L1539.8 679.9L1533.8 688.8L1522.8 693.8L1435.2 693.8L1424.2 688.8L1418.2 679.9L1418.2 657.1L1424.2 648.2Z" fill="#343a2e" stroke="#343a2e" stroke-width="1.5" stroke-linejoin="round"/><path d="M1436.0 644.8L1522.0 644.8L1532.7 649.6L1538.7 657.9L1538.7 679.1L1532.7 687.4L1522.0 692.2L1436.0 692.2L1425.3 687.4L1419.3 679.1L1419.3 657.9L1425.3 649.6Z" fill="#35402d" stroke="#35402d" stroke-width="1.5" stroke-linejoin="round"/><path d="M1436.9 646.5L1521.1 646.5L1531.7 650.9L1537.5 658.6L1537.5 678.4L1531.7 686.1L1521.1 690.5L1436.9 690.5L1426.3 686.1L1420.5 678.4L1420.5 658.6L1426.3 650.9Z" fill="#36462c" stroke="#36462c" stroke-width="1.5" stroke-linejoin="round"/><path d="M1437.7 648.2L1520.3 648.2L1530.6 652.2L1536.3 659.4L1536.3 677.6L1530.6 684.8L1520.3 688.8L1437.7 688.8L1427.4 684.8L1421.7 677.6L1421.7 659.4L1427.4 652.2Z" fill="#374d2a" stroke="#374d2a" stroke-width="1.5" stroke-linejoin="round"/><path d="M1438.6 649.8L1519.4 649.8L1529.5 653.6L1535.2 660.1L1535.2 676.9L1529.5 683.4L1519.4 687.2L1438.6 687.2L1428.5 683.4L1422.8 676.9L1422.8 660.1L1428.5 653.6Z" fill="#395429" stroke="#395429" stroke-width="1.5" stroke-linejoin="round"/><path d="M1856.6 347.0L1947.4 347.0L1958.7 352.4L1965.0 361.9L1965.0 386.1L1958.7 395.6L1947.4 401.0L1856.6 401.0L1845.3 395.6L1839.0 386.1L1839.0 361.9L1845.3 352.4Z" fill="#33352f" stroke="#33352f" stroke-width="1.5" stroke-linejoin="round"/><path d="M1857.5 348.7L1946.5 348.7L1957.7 353.7L1963.8 362.6L1963.8 385.4L1957.7 394.3L1946.5 399.3L1857.5 399.3L1846.3 394.3L1840.2 385.4L1840.2 362.6L1846.3 353.7Z" fill="#343a2e" stroke="#343a2e" stroke-width="1.5" stroke-linejoin="round"/><path d="M1858.3 350.3L1945.7 350.3L1956.6 355.1L1962.7 363.4L1962.7 384.6L1956.6 392.9L1945.7 397.7L1858.3 397.7L1847.4 392.9L1841.3 384.6L1841.3 363.4L1847.4 355.1Z" fill="#35402d" stroke="#35402d" stroke-width="1.5" stroke-linejoin="round"/><path d="M1859.2 352.0L1944.8 352.0L1955.5 356.4L1961.5 364.1L1961.5 383.9L1955.5 391.6L1944.8 396.0L1859.2 396.0L1848.5 391.6L1842.5 383.9L1842.5 364.1L1848.5 356.4Z" fill="#36462c" stroke="#36462c" stroke-width="1.5" stroke-linejoin="round"/><path d="M1860.0 353.7L1944.0 353.7L1954.5 357.7L1960.3 364.9L1960.3 383.1L1954.5 390.3L1944.0 394.3L1860.0 394.3L1849.5 390.3L1843.7 383.1L1843.7 364.9L1849.5 357.7Z" fill="#374d2a" stroke="#374d2a" stroke-width="1.5" stroke-linejoin="round"/><path d="M1860.8 355.3L1943.2 355.3L1953.5 359.1L1959.2 365.6L1959.2 382.4L1953.5 388.9L1943.2 392.7L1860.8 392.7L1850.5 388.9L1844.8 382.4L1844.8 365.6L1850.5 359.1Z" fill="#395429" stroke="#395429" stroke-width="1.5" stroke-linejoin="round"/><path d="M1855.2 441.0L1948.8 441.0L1960.5 448.6L1967.0 461.9L1967.0 496.1L1960.5 509.4L1948.8 517.0L1855.2 517.0L1843.5 509.4L1837.0 496.1L1837.0 461.9L1843.5 448.6Z" fill="#363c2f" stroke="#363c2f" stroke-width="1.5" stroke-linejoin="round"/><path d="M1856.6 443.7L1947.4 443.7L1958.7 450.7L1965.0 463.1L1965.0 494.9L1958.7 507.3L1947.4 514.3L1856.6 514.3L1845.3 507.3L1839.0 494.9L1839.0 463.1L1845.3 450.7Z" fill="#3c4b2d" stroke="#3c4b2d" stroke-width="1.5" stroke-linejoin="round"/><path d="M1858.1 446.3L1945.9 446.3L1956.9 452.9L1963.0 464.3L1963.0 493.7L1956.9 505.1L1945.9 511.7L1858.1 511.7L1847.1 505.1L1841.0 493.7L1841.0 464.3L1847.1 452.9Z" fill="#425c2a" stroke="#425c2a" stroke-width="1.5" stroke-linejoin="round"/><path d="M1859.5 449.0L1944.5 449.0L1955.1 455.0L1961.0 465.5L1961.0 492.5L1955.1 503.0L1944.5 509.0L1859.5 509.0L1848.9 503.0L1843.0 492.5L1843.0 465.5L1848.9 455.0Z" fill="#4a6f28" stroke="#4a6f28" stroke-width="1.5" stroke-linejoin="round"/><path d="M1861.0 451.7L1943.0 451.7L1953.3 457.1L1959.0 466.7L1959.0 491.3L1953.3 500.9L1943.0 506.3L1861.0 506.3L1850.7 500.9L1845.0 491.3L1845.0 466.7L1850.7 457.1Z" fill="#528425" stroke="#528425" stroke-width="1.5" stroke-linejoin="round"/><path d="M1862.4 454.3L1941.6 454.3L1951.5 459.3L1957.0 467.9L1957.0 490.1L1951.5 498.7L1941.6 503.7L1862.4 503.7L1852.5 498.7L1847.0 490.1L1847.0 467.9L1852.5 459.3Z" fill="#5a9a22" stroke="#5a9a22" stroke-width="1.5" stroke-linejoin="round"/><path d="M1857.4 555.5L1946.6 555.5L1957.8 561.3L1964.0 571.5L1964.0 597.5L1957.8 607.7L1946.6 613.5L1857.4 613.5L1846.2 607.7L1840.0 597.5L1840.0 571.5L1846.2 561.3Z" fill="#363c2f" stroke="#363c2f" stroke-width="1.5" stroke-linejoin="round"/><path d="M1858.6 557.5L1945.4 557.5L1956.3 562.9L1962.3 572.4L1962.3 596.6L1956.3 606.1L1945.4 611.5L1858.6 611.5L1847.7 606.1L1841.7 596.6L1841.7 572.4L1847.7 562.9Z" fill="#3c4b2d" stroke="#3c4b2d" stroke-width="1.5" stroke-linejoin="round"/><path d="M1859.8 559.5L1944.2 559.5L1954.8 564.5L1960.7 573.2L1960.7 595.8L1954.8 604.5L1944.2 609.5L1859.8 609.5L1849.2 604.5L1843.3 595.8L1843.3 573.2L1849.2 564.5Z" fill="#425c2a" stroke="#425c2a" stroke-width="1.5" stroke-linejoin="round"/><path d="M1861.0 561.5L1943.0 561.5L1953.3 566.1L1959.0 574.1L1959.0 594.9L1953.3 602.9L1943.0 607.5L1861.0 607.5L1850.7 602.9L1845.0 594.9L1845.0 574.1L1850.7 566.1Z" fill="#4a6f28" stroke="#4a6f28" stroke-width="1.5" stroke-linejoin="round"/><path d="M1862.2 563.5L1941.8 563.5L1951.8 567.7L1957.3 575.0L1957.3 594.0L1951.8 601.3L1941.8 605.5L1862.2 605.5L1852.2 601.3L1846.7 594.0L1846.7 575.0L1852.2 567.7Z" fill="#528425" stroke="#528425" stroke-width="1.5" stroke-linejoin="round"/><path d="M1863.4 565.5L1940.6 565.5L1950.3 569.3L1955.7 576.0L1955.7 593.0L1950.3 599.7L1940.6 603.5L1863.4 603.5L1853.7 599.7L1848.3 593.0L1848.3 576.0L1853.7 569.3Z" fill="#5a9a22" stroke="#5a9a22" stroke-width="1.5" stroke-linejoin="round"/><circle cx="1901.4" cy="584.3" r="49" fill="none" stroke="#6a3f6c" stroke-width="6" opacity="0.8"/><circle cx="1496" cy="983" r="50.5" fill="#44699a" stroke="#744878" stroke-width="7"/><circle cx="1496" cy="983" r="37" fill="#a678cc"/><mask id="wm" maskUnits="userSpaceOnUse" x="1232" y="92" width="876" height="981"><rect x="1232" y="92" width="876" height="981" fill="#fff"/><path d="M1645.5 109.0L1753.1 109.0L1778.0 122.6L1795.3 149.9L1795.3 192.1L1778.0 219.4L1753.1 233.0L1645.5 233.0L1620.6 219.4L1603.3 192.1L1603.3 149.9L1620.6 122.6Z" fill="#555"/></mask><path d="M1703 92L1701 140M1678.5 199C1670 215 1665 220 1655 232L1490 428C1480 440 1477 446 1476 451M1720 199C1725 212 1732 218 1745 226L1888 320C1898 328 1901 338 1901.4 350M1495.4 503V542M1495.4 594L1478.4 643M1478.4 696L1465.2 959M1901.4 402C1898 410 1892 418 1885 428L1871.3 451M1901.4 508V560M1901.4 508C1899 518 1895 528 1885 540L1520 922C1500 940 1490 950 1485.3 959" stroke="#5b8ccc" stroke-width="1.3" fill="none" mask="url(#wm)"/><path d="M1654.0 155.0H1744.0Q1750.0 155.0 1750.0 161.0V181.0Q1750.0 187.0 1744.0 187.0H1654.0Q1648.0 187.0 1648.0 181.0V161.0Q1648.0 155.0 1654.0 155.0Z" fill="#c8cdcd" stroke="#8d9292" stroke-width="0.8"/><path d="M1451.0 460.0H1542.0Q1548.0 460.0 1548.0 466.0V486.0Q1548.0 492.0 1542.0 492.0H1451.0Q1445.0 492.0 1445.0 486.0V466.0Q1445.0 460.0 1451.0 460.0Z" fill="#c8cdcd" stroke="#8d9292" stroke-width="0.8"/><path d="M1456.0 551.0L1545.0 551.0Q1550.0 551.0 1549.0 556.0L1542.0 578.0Q1541.0 583.0 1536.0 583.0L1447.0 583.0Q1442.0 583.0 1443.0 578.0L1450.0 556.0Q1451.0 551.0 1456.0 551.0Z" fill="#c8cdcd" stroke="#8d9292" stroke-width="0.8"/><path d="M1439.0 653.0L1528.0 653.0Q1533.0 653.0 1532.0 658.0L1525.0 679.0Q1524.0 684.0 1519.0 684.0L1430.0 684.0Q1425.0 684.0 1426.0 679.0L1433.0 658.0Q1434.0 653.0 1439.0 653.0Z" fill="#c8cdcd" stroke="#8d9292" stroke-width="0.8"/><path d="M1862.0 358.0L1952.0 358.0Q1957.0 358.0 1956.0 363.0L1948.0 385.0Q1947.0 390.0 1942.0 390.0L1852.0 390.0Q1847.0 390.0 1848.0 385.0L1856.0 363.0Q1857.0 358.0 1862.0 358.0Z" fill="#c8cdcd" stroke="#8d9292" stroke-width="0.8"/><path d="M1857.0 568.0H1947.0Q1953.0 568.0 1953.0 574.0V595.0Q1953.0 601.0 1947.0 601.0H1857.0Q1851.0 601.0 1851.0 595.0V574.0Q1851.0 568.0 1857.0 568.0Z" fill="#c8cdcd" stroke="#8d9292" stroke-width="0.8"/><path d="M1850.0 458.8L1854.3 459.8L1858.7 460.9L1863.0 461.9L1867.3 462.7L1871.7 463.4L1876.0 463.8L1880.3 464.0L1884.7 463.9L1889.0 463.5L1893.3 462.9L1897.7 462.1L1902.0 461.2L1906.3 460.2L1910.7 459.1L1915.0 458.1L1919.3 457.3L1923.7 456.6L1928.0 456.2L1932.3 456.0L1936.7 456.1L1941.0 456.5L1945.3 457.1L1949.7 457.9L1954.0 458.8L1954.0 496.8L1949.7 495.9L1945.3 495.1L1941.0 494.5L1936.7 494.1L1932.3 494.0L1928.0 494.2L1923.7 494.6L1919.3 495.3L1915.0 496.1L1910.7 497.1L1906.3 498.2L1902.0 499.2L1897.7 500.1L1893.3 500.9L1889.0 501.5L1884.7 501.9L1880.3 502.0L1876.0 501.8L1871.7 501.4L1867.3 500.7L1863.0 499.9L1858.7 498.9L1854.3 497.8L1850.0 496.8Z" fill="#c8cdcd" stroke="#3a3030" stroke-width="2.2"/><path d="M1661.0 158.0L1657.0 184.0M1676.0 158.0L1672.0 184.0M1724.0 158.0L1720.0 184.0M1739.0 158.0L1735.0 184.0" stroke="#6c7070" stroke-width="1" fill="none"/><path d="M1460.4 463.0L1456.6 489.0M1474.9 463.0L1471.1 489.0M1521.4 463.0L1517.6 489.0M1535.4 463.0L1531.6 489.0" stroke="#6c7070" stroke-width="1" fill="none"/><path d="M1465.0 554.0L1459.0 580.0M1479.0 554.0L1473.0 580.0M1524.0 554.0L1518.0 580.0M1538.0 554.0L1532.0 580.0" stroke="#6c7070" stroke-width="1" fill="none"/><path d="M1448.0 656.0L1442.0 681.0M1462.0 656.0L1456.0 681.0M1507.0 656.0L1501.0 681.0M1521.0 656.0L1515.0 681.0" stroke="#6c7070" stroke-width="1" fill="none"/><path d="M1870.0 361.0L1864.0 387.0M1885.0 361.0L1879.0 387.0M1930.0 361.0L1924.0 387.0M1944.0 361.0L1938.0 387.0" stroke="#6c7070" stroke-width="1" fill="none"/><path d="M1869.0 465.0L1863.0 493.0M1883.0 465.0L1877.0 493.0M1929.0 465.0L1923.0 493.0M1943.0 465.0L1937.0 493.0" stroke="#6c7070" stroke-width="1" fill="none"/><path d="M1869.0 571.0L1863.0 598.0M1883.0 571.0L1877.0 598.0" stroke="#6c7070" stroke-width="1" fill="none"/><path d="M1927 571L1944 571L1939 598L1922 598Z" fill="#b455c8"/><path d="M1461.0 972.0L1560.0 972.0Q1565.0 972.0 1564.0 977.0L1557.0 998.0Q1556.0 1003.0 1551.0 1003.0L1452.0 1003.0Q1447.0 1003.0 1448.0 998.0L1455.0 977.0Q1456.0 972.0 1461.0 972.0Z" fill="#5a5a5a" stroke="#cfd3d3" stroke-width="1.2"/><path d="M1456.0 968.0L1554.0 968.0Q1559.0 968.0 1558.0 973.0L1551.0 993.0Q1550.0 998.0 1545.0 998.0L1447.0 998.0Q1442.0 998.0 1443.0 993.0L1450.0 973.0Q1451.0 968.0 1456.0 968.0Z" fill="#c8cdcd"/><path d="M1521 970L1537 970L1532 996L1516 996Z" fill="#a070c8"/><path d="M1538 970L1547 970Q1551 970 1550 974L1545 994Q1544 997 1540 996L1532 996Z" fill="#04a0e8"/><path d="M1463.0 971.0L1455.0 995.0M1478.0 971.0L1470.0 995.0" stroke="#6c7070" stroke-width="1" fill="none"/><rect x="1690" y="162" width="18" height="18" fill="#b8c4c8" stroke="#2c2c2c" stroke-width="1.6"/><path d="M1693 165h4v4h-4zM1701 165h4v4h-4zM1697 169h4v4h-4zM1693 173h4v4h-4zM1701 173h4v4h-4z" fill="#e8eef0"/><ellipse cx="1496" cy="476" rx="9" ry="6" fill="#9ea2a4" stroke="#6a6e70" stroke-width="1"/><path d="M1488.0 556.0h10l-3 6 5 4-6 8h-8l3-6-3-4z" fill="#e8ecec" stroke="#444" stroke-width="1"/><path d="M1498.0 568.0q-4 3-10 4" stroke="#7a8a9a" stroke-width="4" fill="none"/><path d="M1498.0 562.0l5-5 2 4z" fill="#e05020"/><circle cx="1502.0" cy="573.0" r="2" fill="none" stroke="#555"/><path d="M1471.0 658.0h10l-3 6 5 4-6 8h-8l3-6-3-4z" fill="#e8ecec" stroke="#444" stroke-width="1"/><path d="M1481.0 670.0q-4 3-10 4" stroke="#7a8a9a" stroke-width="4" fill="none"/><path d="M1481.0 664.0l5-5 2 4z" fill="#e05020"/><circle cx="1485.0" cy="675.0" r="2" fill="none" stroke="#555"/><path d="M1893.0 364.0h10l-3 6 5 4-6 8h-8l3-6-3-4z" fill="#e8ecec" stroke="#444" stroke-width="1"/><path d="M1903.0 376.0q-4 3-10 4" stroke="#7a8a9a" stroke-width="4" fill="none"/><path d="M1903.0 370.0l5-5 2 4z" fill="#e05020"/><circle cx="1907.0" cy="381.0" r="2" fill="none" stroke="#555"/><ellipse cx="1902" cy="478" rx="10" ry="6" fill="#f0c020" transform="rotate(-25 1902 478)"/><path d="M1894 484l10-4 4 6-8 4z" fill="#222"/><path d="M1906 470l8 2-4 6z" fill="#e07a20"/><path d="M1892 582l8-5 8 5-8 5z" fill="#e8ecec" stroke="#556" stroke-width="0.8"/><path d="M1886 588l14-3 14 3-14 4z" fill="#3a6ab0"/><rect x="1489" y="971" width="16" height="13" fill="#e8ecec" stroke="#444" stroke-width="1"/><path d="M1493 974l4 6 4-6z" fill="#d06020"/><circle cx="1491" cy="988" r="5" fill="#9a9a9a" stroke="#333" stroke-width="1"/><circle cx="1698.0" cy="147.0" r="4.8" fill="#bcb8a8"/><circle cx="1678.5" cy="194.7" r="4.8" fill="#bcb8a8"/><circle cx="1719.7" cy="194.7" r="4.8" fill="#bcb8a8"/><circle cx="1476.0" cy="451.3" r="4.8" fill="#bcb8a8"/><circle cx="1516.3" cy="451.3" r="4.8" fill="#bcb8a8"/><circle cx="1495.4" cy="499.0" r="4.8" fill="#bcb8a8"/><circle cx="1495.4" cy="542.3" r="4.8" fill="#bcb8a8"/><circle cx="1495.4" cy="590.0" r="4.8" fill="#bcb8a8"/><circle cx="1478.4" cy="643.7" r="4.8" fill="#bcb8a8"/><circle cx="1478.4" cy="692.0" r="4.8" fill="#bcb8a8"/><circle cx="1901.4" cy="350.3" r="4.8" fill="#bcb8a8"/><circle cx="1901.4" cy="398.0" r="4.8" fill="#bcb8a8"/><circle cx="1871.3" cy="451.3" r="4.8" fill="#bcb8a8"/><circle cx="1891.6" cy="452.2" r="4.8" fill="#bcb8a8"/><circle cx="1911.8" cy="455.8" r="4.8" fill="#bcb8a8"/><circle cx="1932.4" cy="458.2" r="4.8" fill="#bcb8a8"/><circle cx="1901.4" cy="503.8" r="4.8" fill="#bcb8a8"/><circle cx="1901.4" cy="560.0" r="4.8" fill="#bcb8a8"/><circle cx="1901.4" cy="608.0" r="4.8" fill="#bcb8a8"/><circle cx="1465.2" cy="958.9" r="4.8" fill="#bcb8a8"/><circle cx="1485.3" cy="958.9" r="4.8" fill="#bcb8a8"/><circle cx="1506.0" cy="958.9" r="4.8" fill="#bcb8a8"/><circle cx="1526.5" cy="958.9" r="4.8" fill="#bcb8a8"/><circle cx="1495.8" cy="1006.5" r="4.8" fill="#bcb8a8"/><text x="1761.0" y="178.5" font-family="Liberation Sans, sans-serif" font-size="23.48" fill="#d7d9d9" textLength="122.0" lengthAdjust="spacingAndGlyphs" >PolyWireUV4</text><text x="1558.0" y="483.0" font-family="Liberation Sans, sans-serif" font-size="23.48" fill="#d7d9d9" textLength="103.5" lengthAdjust="spacingAndGlyphs" >subdivide1</text><text x="1561.0" y="574.0" font-family="Liberation Sans, sans-serif" font-size="23.48" fill="#d7d9d9" textLength="148.0" lengthAdjust="spacingAndGlyphs" >attribpromote6</text><text x="1562.0" y="609.5" font-family="Liberation Sans, sans-serif" font-size="18.12" fill="#6aa0e0" textLength="59.0" lengthAdjust="spacingAndGlyphs" >prim_u</text><text x="1544.0" y="675.5" font-family="Liberation Sans, sans-serif" font-size="23.48" fill="#d7d9d9" textLength="147.0" lengthAdjust="spacingAndGlyphs" >attribpromote7</text><text x="1544.0" y="710.0" font-family="Liberation Sans, sans-serif" font-size="21.13" fill="#6aa0e0" textLength="65.0" lengthAdjust="spacingAndGlyphs" >prim_id</text><text x="1966.0" y="381.0" font-family="Liberation Sans, sans-serif" font-size="23.48" fill="#d7d9d9" textLength="148.0" lengthAdjust="spacingAndGlyphs" >attribpromote5</text><text x="1966.0" y="417.0" font-family="Liberation Sans, sans-serif" font-size="18.12" fill="#6aa0e0" textLength="66.0" lengthAdjust="spacingAndGlyphs" >curve_v</text><text x="1963.0" y="464.0" font-family="Liberation Sans, sans-serif" font-size="19.57" fill="#6f6f6f" textLength="148.0" lengthAdjust="spacingAndGlyphs" >Attribute Wrangle</text><text x="1963.0" y="487.0" font-family="Liberation Sans, sans-serif" font-size="23.48" fill="#d7d9d9" textLength="48.0" lengthAdjust="spacingAndGlyphs" >ANIM</text><text x="1963.0" y="592.0" font-family="Liberation Sans, sans-serif" font-size="23.48" fill="#d7d9d9" textLength="106.0" lengthAdjust="spacingAndGlyphs" >transform1</text><text x="1560.0" y="968.5" font-family="Liberation Sans, sans-serif" font-size="19.57" fill="#6f6f6f" textLength="115.0" lengthAdjust="spacingAndGlyphs" >Attribute VOP</text><text x="1561.0" y="990.5" font-family="Liberation Sans, sans-serif" font-size="22.17" fill="#d7d9d9" textLength="167.0" lengthAdjust="spacingAndGlyphs" >LOOK_UP_ATTRS</text><path d="M1767.0 193.0a4 4 0 0 1 8 0v3h-2v-3a2 2 0 0 0-4 0v3h-2z" fill="#6a6a6a"/><rect x="1765.0" y="194.0" width="12" height="7" rx="1" fill="#6a6a6a"/><circle cx="1974.0" cy="502.3" r="5.2" fill="#1a1a1a" stroke="#b9c98a" stroke-width="1.6"/><path d="M1974.0 502.3v-3M1974.0 502.3h-2.5" stroke="#c8d89a" stroke-width="1.2"/><path d="M1992.5 500.0a4 4 0 0 1 8 0v3h-2v-3a2 2 0 0 0-4 0v3h-2z" fill="#6a6a6a"/><rect x="1990.5" y="501.0" width="12" height="7" rx="1" fill="#6a6a6a"/><circle cx="1974.0" cy="608.0" r="5.2" fill="#1a1a1a" stroke="#b9c98a" stroke-width="1.6"/><path d="M1974.0 608.0v-3M1974.0 608.0h-2.5" stroke="#c8d89a" stroke-width="1.2"/><circle cx="1571" cy="1006.5" r="6" fill="#5aa02a" stroke="#8ad04a" stroke-width="1.2"/><circle cx="1571" cy="1006.5" r="2.5" fill="none" stroke="#e0f0d0" stroke-width="1.2"/><circle cx="1593.4" cy="1006.5" r="5.2" fill="#1a1a1a" stroke="#b9c98a" stroke-width="1.6"/><path d="M1593.4 1006.5v-3M1593.4 1006.5h-2.5" stroke="#c8d89a" stroke-width="1.2"/></g></svg><svg width="2108" height="1073" style="left:0;top:0"><path d="M-6 10h12v-5l9 10-9 10v-5h-12z" fill="#5a5b5b"/><path d="M4 23l6 5-6 5z" fill="#454545"/><g transform="translate(36 2)"><rect x="1" y="14" width="26" height="16" fill="#555758" stroke="#2a2a2a" stroke-width="1"/><path d="M4 20h8M4 23h16M4 27h8" stroke="#b8c0c4" stroke-width="1.2"/><path d="M1 13h26v-2h-26z" fill="#cfd2d2"/><path d="M1 10l24-8 2 3-24 8z" fill="#cfd2d2" stroke="#222" stroke-width="0.8"/><path d="M5 9l3-1M11 7l3-1M17 5l3-1" stroke="#222" stroke-width="1.5"/><path d="M2 13l6-5 0 5z" fill="#9eb8c8"/></g><text x="70.0" y="21.0" font-family="Liberation Sans, sans-serif" font-size="13.91" fill="#d8dada" textLength="22.0" lengthAdjust="spacingAndGlyphs" >obj</text><path d="M99 0L109.5 16L99 33" stroke="#111" stroke-width="1.3" fill="none"/><g transform="translate(116 4)"><rect x="0.5" y="1" width="12" height="19" rx="5" fill="#4a70b8"/><ellipse cx="6.5" cy="3" rx="6" ry="2.5" fill="#b8c8e0"/><circle cx="21" cy="13" r="7" fill="#b82020"/><circle cx="19" cy="11" r="4" fill="#d08040"/><path d="M14 8l-8 16h16z" fill="#d8c020"/><path d="M14 8l-8 16h8z" fill="#d8d8d0"/></g><text x="149.5" y="21.0" font-family="Liberation Sans, sans-serif" font-size="18.12" fill="#d8dada" textLength="35.0" lengthAdjust="spacingAndGlyphs" >geo1</text><g transform="translate(1031 6)"><path d="M0 12l11-3v6z" fill="#d0d4d4"/><path d="M10 2l7 7h8v-3h2v13h-2v-3h-8l-7 8z" fill="#c8cccc" stroke="#555" stroke-width="0.6"/><ellipse cx="15" cy="21" rx="12" ry="1.5" fill="#303030"/></g><circle cx="1080" cy="17" r="13.2" fill="none" stroke="#6a88b8" stroke-width="2"/><circle cx="1080" cy="17" r="8.6" fill="none" stroke="#6a88b8" stroke-width="1.6"/><circle cx="1080" cy="17" r="3.4" fill="#5078c8"/><path d="M1119 13l13-5 11 4v14l-12 4-12-4z" fill="#8fa4b0" stroke="#1a1a1a" stroke-width="1"/><path d="M1119 13l13 4 11-5M1132 17v13" stroke="#1a1a1a" stroke-width="1" fill="none"/><path d="M1120 13.5l12 3.5 10-4.5-11-4z" fill="#c8d4da"/><path d="M1138.0 28.0h10.0l-5.0 6.0z" fill="#8c8c8c"/><rect x="1153" y="3" width="12" height="20" rx="6" fill="#4a4b4b" stroke="#b8b0a0" stroke-width="1"/><path d="M1163 14l-9 16h15z" fill="#4a4b4b" stroke="#c8c8c8" stroke-width="1"/><circle cx="1173" cy="17" r="7.8" fill="#5a7cc0" stroke="#2a4a9a" stroke-width="1.6"/><circle cx="1170.5" cy="14.5" r="3" fill="#c0d0ea"/><path d="M1174.0 28.0h10.0l-5.0 6.0z" fill="#8c8c8c"/><rect x="1190" y="3.5" width="26" height="27" fill="#c9cfd0" stroke="#1a1a1a" stroke-width="1.5"/><path d="M1210.0 28.5h10.0l-5.0 6.0z" fill="#8c8c8c"/><text x="2.0" y="74.0" font-family="Liberation Sans, sans-serif" font-size="16.96" fill="#d8dada" font-weight="bold" textLength="36.0" lengthAdjust="spacingAndGlyphs" >View</text><ellipse cx="437" cy="73" rx="13" ry="5" fill="none" stroke="#4a78c8" stroke-width="2.2"/><path transform="translate(432 57) scale(1.0)" d="M0 0v18l4-4 4 8 3-1.5-4-7.5h6z" fill="#d8dcdc" stroke="#111" stroke-width="0.8"/><path d="M444.0 79.0h10.0l-5.0 6.0z" fill="#8c8c8c"/><path d="M472 61l10 4 13 6 5 4" stroke="#4a78c8" stroke-width="2.6" fill="none"/><path transform="translate(481 58) scale(1.0)" d="M0 0v18l4-4 4 8 3-1.5-4-7.5h6z" fill="#d8dcdc" stroke="#111" stroke-width="0.8"/><path d="M493.0 79.0h10.0l-5.0 6.0z" fill="#8c8c8c"/><path d="M521 62l14-3v12l-14 3z" fill="#3a3c3e" stroke="#111" stroke-width="1"/><path d="M532 60v12" stroke="#c03020" stroke-width="1"/><path d="M523 78l10-4 10 0 2 3-10 4z" fill="#5a88d0"/><path d="M524 79l16-4" stroke="#cfe" stroke-width="1"/><path transform="translate(537 55) scale(0.9)" d="M0 0v18l4-4 4 8 3-1.5-4-7.5h6z" fill="#d8dcdc" stroke="#111" stroke-width="0.8"/><path d="M542.0 79.0h10.0l-5.0 6.0z" fill="#8c8c8c"/><path d="M559.5 50v36M601.5 50v36M644.5 50v36M693.5 50v36" stroke="#4c4c4c" stroke-width="1"/><rect x="567" y="51" width="33" height="35" fill="#5d7591" stroke="#4a5a70" stroke-width="1"/><g fill="#d4d8da" stroke="#555" stroke-width="0.7"><circle cx="576" cy="66" r="6"/><circle cx="588" cy="62" r="6"/><rect x="578" y="72" width="9" height="10"/><rect x="588" y="70" width="8" height="8"/><path d="M571 75l6 2v6l-6-2z"/></g><circle cx="576" cy="66" r="2" fill="#888"/><circle cx="588" cy="62" r="2" fill="#888"/><rect x="609" y="58.5" width="20.5" height="17.5" rx="4" fill="#c9d2d8" stroke="#1a1a1a" stroke-width="2"/><rect x="608" y="57.5" width="22.5" height="19.5" rx="5" fill="none" stroke="#888" stroke-width="0.8"/><path d="M619 61v12M613 67h12" stroke="#6a90d8" stroke-width="2.2"/><path d="M628 76l5 4" stroke="#888" stroke-width="2"/><circle cx="669" cy="68" r="13" fill="none" stroke="#6e3c3c" stroke-width="2.4" stroke-dasharray="2 0.8"/><rect x="660" y="62.5" width="18" height="10.5" rx="1" fill="#484848"/><rect x="663.5" y="66.5" width="11" height="3.5" fill="#2a2a2a"/><g fill="#d0d4d6"><ellipse cx="709" cy="57" rx="6" ry="2.5"/><ellipse cx="726" cy="57" rx="6" ry="2.5"/><ellipse cx="709" cy="62" rx="6" ry="2.5"/><ellipse cx="726" cy="62" rx="6" ry="2.5"/><ellipse cx="718" cy="58" rx="4" ry="3"/></g><circle cx="718" cy="72" r="9" fill="#d0d4d6" stroke="#777" stroke-width="0.8"/><circle cx="718.5" cy="73" r="5.5" fill="#1e2a3a"/><path d="M715 76l6-6" stroke="#5a9ae0" stroke-width="2"/><circle cx="710" cy="71.5" r="1" fill="#e02020"/><rect x="740" y="54.5" width="27" height="26" fill="#c9cfd0" stroke="#3a3a3a" stroke-width="1.2"/><rect x="741.5" y="56" width="24" height="3" fill="#a8a8a0"/><g transform="translate(754 68)"><circle r="4.8" fill="none" stroke="#1e1e1e" stroke-width="3"/><rect x="-1.6" y="-9" width="3.2" height="5" fill="#1e1e1e" transform="rotate(0)"/><rect x="-1.6" y="-9" width="3.2" height="5" fill="#1e1e1e" transform="rotate(45)"/><rect x="-1.6" y="-9" width="3.2" height="5" fill="#1e1e1e" transform="rotate(90)"/><rect x="-1.6" y="-9" width="3.2" height="5" fill="#1e1e1e" transform="rotate(135)"/><rect x="-1.6" y="-9" width="3.2" height="5" fill="#1e1e1e" transform="rotate(180)"/><rect x="-1.6" y="-9" width="3.2" height="5" fill="#1e1e1e" transform="rotate(225)"/><rect x="-1.6" y="-9" width="3.2" height="5" fill="#1e1e1e" transform="rotate(270)"/><rect x="-1.6" y="-9" width="3.2" height="5" fill="#1e1e1e" transform="rotate(315)"/></g><circle cx="1160.5" cy="59.5" r="4" fill="#4a70b8"/><path d="M1156.0 63.0h9l-1 3h-7z" fill="#d8dcdc"/><circle cx="1173.5" cy="64.5" r="4" fill="#4a70b8"/><path d="M1169.0 68.0h9l-1 3h-7z" fill="#d8dcdc"/><circle cx="1161.0" cy="74.0" r="4" fill="#4a70b8"/><path d="M1156.5 77.5h9l-1 3h-7z" fill="#d8dcdc"/><path d="M1174.0 79.0h10.0l-5.0 6.0z" fill="#8c8c8c"/><circle cx="1203" cy="66.5" r="11.5" fill="#2a2a2a" stroke="#d8d8d8" stroke-width="1.8"/><path d="M1198.5 62.5q0-5 4.5-5t4.5 4.5q0 2.5-3 4t-1.5 3.5" stroke="#d8d8d8" stroke-width="2.8" fill="none"/><rect x="1201.3" y="71.5" width="3.2" height="3" fill="#d8d8d8"/><rect x="1007.5" y="101.5" width="72" height="25" rx="12.5" fill="rgba(70,84,94,0.42)" stroke="#a8b2b4" stroke-width="1"/><text x="1018.0" y="119.5" font-family="Liberation Sans, sans-serif" font-size="18.12" fill="#e6ecee" textLength="42.0" lengthAdjust="spacingAndGlyphs" >Persp</text><path d="M1063 114h6l-3 3z" fill="#e6ecee"/><rect x="1088.5" y="101.5" width="86" height="25" rx="12.5" fill="rgba(70,84,94,0.42)" stroke="#a8b2b4" stroke-width="1"/><text x="1099.0" y="119.5" font-family="Liberation Sans, sans-serif" font-size="18.12" fill="#e6ecee" textLength="55.0" lengthAdjust="spacingAndGlyphs" >No cam</text><path d="M1158 114h6l-3 3z" fill="#e6ecee"/><rect x="1186" y="138" width="35" height="34" fill="#5a7090" stroke="#46566a" stroke-width="1"/><path d="M1190 160l13-7 13 7-13 7z" fill="#d8dcdc" stroke="#111" stroke-width="1.2"/><path d="M1196.5 156.5l13 7M1209.5 156.5l-13 7" stroke="#111" stroke-width="1.2"/><path d="M1214.0 166.0l6.0 4.0l-6.0 4.0z" fill="#111"/><path d="M1191 177l20 1 4 20-19 5z" fill="#3e4240" stroke="#b8c040" stroke-width="1.2"/><circle cx="1203" cy="190" r="5" fill="none" stroke="#d8dcdc" stroke-width="1.8"/><path d="M1214.0 200.0l6.0 4.5l-6.0 4.5z" fill="#8c8c8c"/><path d="M1197 228v-5a6 6 0 0 1 12 0v5" stroke="#d0d4d4" stroke-width="3" fill="none"/><rect x="1194" y="228" width="20" height="15" fill="#c8cccc" stroke="#777" stroke-width="0.6"/><path d="M1195 232h18M1195 236h18M1195 240h18" stroke="#9aa" stroke-width="0.6"/><rect x="1186" y="253" width="35" height="35" fill="#5a7090" stroke="#46566a" stroke-width="1"/><circle cx="1203" cy="266" r="8.5" fill="#d8dcdc" stroke="#111" stroke-width="1"/><path d="M1199 262l8 8M1207 262l-8 8" stroke="#222" stroke-width="2.4"/><path d="M1199 275h8M1199 278h8M1200 281h6" stroke="#d8dcdc" stroke-width="1.6"/><circle cx="1202" cy="306" r="12" fill="#8a8e90"/><circle cx="1204" cy="307" r="9" fill="#c8ccce" stroke="#555" stroke-width="1"/><path d="M1214.0 312.0l6.0 4.5l-6.0 4.5z" fill="#8c8c8c"/><path d="M1203 329a8 8 0 0 1 5 14v5h-10v-5a8 8 0 0 1 5-14z" fill="#c8c0a8"/><path d="M1199 351h8M1199 354h8" stroke="#aaa" stroke-width="1.2"/><path d="M1214.0 348.0l6.0 4.5l-6.0 4.5z" fill="#8c8c8c"/><path d="M1203.5 366a8 8 0 0 1 5 14v4h-10v-4a8 8 0 0 1 5-14z" fill="#d0d4d4" stroke="#b0b870" stroke-width="1"/><path d="M1203.5 369v10M1198.5 374h10" stroke="#333" stroke-width="2.5"/><path d="M1199 387h9M1199 390h9" stroke="#aaa" stroke-width="1.2"/><path d="M1214.0 385.0l6.0 4.5l-6.0 4.5z" fill="#8c8c8c"/><path d="M1203 403a8 8 0 0 1 5 14v4h-10v-4a8 8 0 0 1 5-14z" fill="#d0d4d4"/><path d="M1203 406v10M1198 411h10" stroke="#333" stroke-width="2.5"/><ellipse cx="1203" cy="424" rx="12" ry="3" fill="none" stroke="#d0d4d4" stroke-width="1.6"/><path d="M1214.0 422.0l6.0 4.5l-6.0 4.5z" fill="#8c8c8c"/><path d="M1191 450l12-6 12 6v14l-12 6-12-6z" fill="#d0d4d4"/><path d="M1191 450l12 6 12-6M1203 456v14" stroke="#333" stroke-width="1" fill="none"/><path d="M1197 447l6 3 6-3-6-3zM1191 457l6 3v7l-6-3zM1209 460l6-3v7l-6 3zM1203 456l6-3v7l-6 3z" fill="#222"/><path d="M1214.0 466.0l6.0 4.5l-6.0 4.5z" fill="#8c8c8c"/><g transform="translate(1190 483)"><path d="M0 2q6-3 12 2l12 8q2 3-1 5q-6 2-10-3z" fill="#d8dcdc"/><path d="M2 4q5 0 9 4l3 6q-6 1-10-3z" fill="#1a1a1a"/><path d="M12 8q8 2 12 8" stroke="#d8dcdc" stroke-width="1.5" fill="none"/></g><path d="M1209.0 505.0h11.0l-5.5 6.0z" fill="#8c8c8c"/><rect x="1189" y="529" width="15" height="13" rx="2" fill="#8a8e90"/><path d="M1194 531l7 5-7 5z" fill="#c8cccc"/><g transform="translate(1193 517)"><path d="M0 2q6-3 12 2l12 8q2 3-1 5q-6 2-10-3z" fill="#d8dcdc"/><path d="M2 4q5 0 9 4l3 6q-6 1-10-3z" fill="#1a1a1a"/><path d="M12 8q8 2 12 8" stroke="#d8dcdc" stroke-width="1.5" fill="none"/></g><path d="M1214.0 534.0l6.0 4.5l-6.0 4.5z" fill="#8c8c8c"/><path d="M1184.5 550.5H1221" stroke="#4a4a4a" stroke-width="1"/><circle cx="1202.3" cy="576" r="4.3" fill="#c8cccc"/><circle cx="1198" cy="619" r="5" fill="#c8cccc"/><path d="M1200 617l11-10" stroke="#c8cccc" stroke-width="2.4"/><path d="M1194 662l13-15 4 3z" fill="#aaa"/><circle cx="1208.5" cy="646" r="4" fill="#d0d4d4"/><circle cx="1196" cy="697" r="4.6" fill="#c8cccc"/><text x="1197.0" y="695.0" font-family="Liberation Sans, sans-serif" font-size="15.94" fill="#d8dcdc" font-weight="bold" textLength="18.0" lengthAdjust="spacingAndGlyphs" >12</text><path d="M1191 736l11-10 12 3-2 13z" fill="#c8cccc"/><path d="M1206 732l4-14" stroke="#c8cccc" stroke-width="2.6"/><path d="M1204 731l4-12" stroke="#444" stroke-width="0.8"/><path d="M1191 772l11-10 12 3-2 14z" fill="#c8cccc"/><text x="1199.0" y="767.0" font-family="Liberation Sans, sans-serif" font-size="15.94" fill="#d8dcdc" font-weight="bold" textLength="18.0" lengthAdjust="spacingAndGlyphs" >12</text><path d="M1192 817V792h22" stroke="#c8cccc" stroke-width="1.6" fill="none"/><path d="M1192 817Q1196 798 1214 792" stroke="#888" stroke-width="1.6" fill="none"/><circle cx="1192" cy="792" r="1.8" fill="#ddd"/><circle cx="1214" cy="792" r="2.2" fill="#ddd"/><circle cx="1192" cy="817" r="2" fill="#ddd"/><path d="M1191 851l14-16 5 3-9 14z" fill="#c8cccc"/><path d="M1205 835l9 15-13 3z" fill="#4a78c0"/><rect x="1186" y="864" width="35" height="35" fill="#5a7090" stroke="#46566a" stroke-width="1"/><rect x="1191.5" y="871" width="22" height="22" fill="#d8dcdc" stroke="#2a2a2a" stroke-width="1"/><path d="M1191.5 871h5.5v5.5h-5.5zM1202.5 871h5.5v5.5h-5.5zM1197 876.5h5.5v5.5h-5.5zM1208 876.5h5.5v5.5h-5.5zM1191.5 882h5.5v5.5h-5.5zM1202.5 882h5.5v5.5h-5.5zM1197 887.5h5.5v5.5h-5.5zM1208 887.5h5.5v5.5h-5.5z" fill="#b4c8cc"/><path d="M1214.0 891.0l6.0 4.0l-6.0 4.0z" fill="#111"/><path d="M1190 919l12.5-11 12.5 11-12.5 11z" fill="#c8c4b8" stroke="#5aa0e8" stroke-width="2"/><path d="M1195 919h15M1202.5 919v8" stroke="#777" stroke-width="1"/><path d="M1191 947q5 3 11 0q6 3 12 0q-2 5 0 10q2 5 0 10q-6-3-12 0q-6-3-11 0q2-5 0-10q-2-5 0-10z" fill="#c8c0b4" stroke="#4aa020" stroke-width="2"/><rect x="1198" y="952" width="9" height="9" fill="#d8d4c8" stroke="#999" stroke-width="0.6"/><path d="M1203 996l9-12M1203 996l-12 0M1203 996l7 11" stroke="#c8cccc" stroke-width="3" stroke-linecap="round"/><circle cx="1203" cy="996" r="4.5" fill="#d0d4d4"/><path d="M1190 1040a13 13 0 1 1 26 0" stroke="#999" stroke-width="1.6" stroke-dasharray="1.5 1.5" fill="none"/><rect x="1195.5" y="1022" width="15" height="15" fill="#c8d0d4"/><path d="M1195.5 1027h15M1195.5 1032h15" stroke="#b8b0a0" stroke-width="2"/><path d="M1199.0 1051.0h8.0l-4.0 6.0z" fill="#8c8c8c"/><path d="M1241 28l11-11v6h12v10h-12v6z" fill="#d0ccc0" stroke="#333" stroke-width="0.6"/><path d="M1264 36l4 4-4 4z" fill="#aaa"/><path d="M1302 28l-11-11v6h-12v10h12v6z" fill="#5a5b5b"/><g transform="translate(1322 12)"><rect x="1" y="14" width="26" height="16" fill="#555758" stroke="#2a2a2a" stroke-width="1"/><path d="M4 20h8M4 23h16M4 27h8" stroke="#b8c0c4" stroke-width="1.2"/><path d="M1 13h26v-2h-26z" fill="#cfd2d2"/><path d="M1 10l24-8 2 3-24 8z" fill="#cfd2d2" stroke="#222" stroke-width="0.8"/><path d="M5 9l3-1M11 7l3-1M17 5l3-1" stroke="#222" stroke-width="1.5"/><path d="M2 13l6-5 0 5z" fill="#9eb8c8"/></g><text x="1356.0" y="31.0" font-family="Liberation Sans, sans-serif" font-size="13.91" fill="#d8dada" textLength="22.0" lengthAdjust="spacingAndGlyphs" >obj</text><path d="M1385 9L1395.5 26L1385 43" stroke="#111" stroke-width="1.3" fill="none"/><g transform="translate(1402 14)"><rect x="0.5" y="1" width="12" height="19" rx="5" fill="#4a70b8"/><ellipse cx="6.5" cy="3" rx="6" ry="2.5" fill="#b8c8e0"/><circle cx="21" cy="13" r="7" fill="#b82020"/><circle cx="19" cy="11" r="4" fill="#d08040"/><path d="M14 8l-8 16h16z" fill="#d8c020"/><path d="M14 8l-8 16h8z" fill="#d8d8d0"/></g><text x="1435.5" y="31.0" font-family="Liberation Sans, sans-serif" font-size="18.12" fill="#d8dada" textLength="35.0" lengthAdjust="spacingAndGlyphs" >geo1</text><g transform="translate(2042 16)"><path d="M0 12l11-3v6z" fill="#d0d4d4"/><path d="M10 2l7 7h8v-3h2v13h-2v-3h-8l-7 8z" fill="#c8cccc" stroke="#555" stroke-width="0.6"/><ellipse cx="15" cy="21" rx="12" ry="1.5" fill="#303030"/></g><circle cx="2091" cy="27" r="13.2" fill="none" stroke="#6a88b8" stroke-width="2"/><circle cx="2091" cy="27" r="8.6" fill="none" stroke="#6a88b8" stroke-width="1.6"/><circle cx="2091" cy="27" r="3.4" fill="#5078c8"/><text x="1287.0" y="79.3" font-family="Liberation Sans, sans-serif" font-size="18.84" fill="#d8dada" textLength="31.0" lengthAdjust="spacingAndGlyphs" >Add</text><text x="1341.0" y="79.3" font-family="Liberation Sans, sans-serif" font-size="18.84" fill="#d8dada" textLength="32.0" lengthAdjust="spacingAndGlyphs" >Edit</text><text x="1395.0" y="79.3" font-family="Liberation Sans, sans-serif" font-size="18.84" fill="#d8dada" textLength="21.0" lengthAdjust="spacingAndGlyphs" >Go</text><text x="1438.5" y="79.3" font-family="Liberation Sans, sans-serif" font-size="18.84" fill="#d8dada" textLength="39.0" lengthAdjust="spacingAndGlyphs" >View</text><text x="1499.0" y="79.3" font-family="Liberation Sans, sans-serif" font-size="18.84" fill="#d8dada" textLength="44.0" lengthAdjust="spacingAndGlyphs" >Tools</text><text x="1565.0" y="79.3" font-family="Liberation Sans, sans-serif" font-size="18.84" fill="#d8dada" textLength="56.0" lengthAdjust="spacingAndGlyphs" >Layout</text><text x="1640.0" y="79.3" font-family="Liberation Sans, sans-serif" font-size="18.84" fill="#d8dada" textLength="37.0" lengthAdjust="spacingAndGlyphs" >Labs</text><text x="1695.5" y="79.3" font-family="Liberation Sans, sans-serif" font-size="18.84" fill="#d8dada" textLength="37.0" lengthAdjust="spacingAndGlyphs" >Help</text><path d="M1752 62l18 21M1774 61l-20 22" stroke="#c8cccc" stroke-width="3.2"/><circle cx="1753" cy="64" r="3" fill="none" stroke="#c8cccc" stroke-width="2"/><path d="M1793 62h4v4h-4zM1800 69h7v4h-7zM1800 75h7v4h-7zM1800 81h7v4h-7z" fill="#d0d0c8"/><path d="M1795 66v17h5M1795 71h5M1795 77h5" stroke="#c8cccc" stroke-width="1.2" fill="none"/><rect x="1824.5" y="60" width="23" height="26" fill="#c9d0d2" stroke="#111" stroke-width="0.8"/><rect x="1860" y="60.5" width="23" height="23" fill="#d0d4d4" stroke="#888" stroke-width="0.8"/><g><rect x="1862" y="63" width="5" height="5" fill="#c81010"/><rect x="1869" y="63" width="5" height="5" fill="#e08020"/><rect x="1876" y="63" width="5" height="5" fill="#e0c020"/><rect x="1862" y="70" width="5" height="5" fill="#2050a0"/><rect x="1869" y="70" width="5" height="5" fill="#30a020"/><rect x="1876" y="70" width="5" height="5" fill="#80a0e0"/><rect x="1862" y="77" width="5" height="5" fill="#111"/><rect x="1869" y="77" width="5" height="5" fill="#888"/><rect x="1876" y="77" width="5" height="5" fill="#d8d8d8"/></g><rect x="1896" y="61" width="24" height="24" fill="#3a3a3a" stroke="#aaa" stroke-width="1.2"/><path d="M1900 65h6v3h-6zM1910 65h6v3h-6zM1900 77h6v3h-6zM1910 77h6v3h-6z" fill="#d8d8d8"/><rect x="1931" y="61" width="24" height="24" fill="#d0d4d4" stroke="#333" stroke-width="0.8"/><rect x="1935" y="67" width="12" height="6" fill="none" stroke="#222" stroke-width="1.4"/><rect x="1941" y="76" width="12" height="6" fill="none" stroke="#222" stroke-width="1.4"/><path d="M1966 60h25v18q-2 8-10 8h-15z" fill="#d8d4c0" stroke="#e0a020" stroke-width="1"/><path d="M1969 86l22-26v18q-2 8-10 8z" fill="#c0c040"/><path d="M1970 65h16M1970 69h12" stroke="#222" stroke-width="1.6"/><rect x="2002" y="60" width="24" height="23" fill="#5a88d0" stroke="#888" stroke-width="1"/><circle cx="2008" cy="66" r="3" fill="#e0c020"/><path d="M2004 82l8-8 6 5 6-6v9z" fill="#a8b8d8"/><path d="M2025 76v10M2020 81h10" stroke="#fff" stroke-width="2.6"/><path d="M2040 68l12-7 12 7v14h-24z" fill="#e08a40" stroke="#c02020" stroke-width="1.4"/><path d="M2042 73h20" stroke="#d8c8a0" stroke-width="3"/><path d="M2083 61a11 11 0 0 0 0 20a9 11 0 0 1 0-20z" fill="#c8cccc"/><path d="M2094 68l8 4.5-8 4.5z" fill="#8a8a8a"/></svg></body></html>
